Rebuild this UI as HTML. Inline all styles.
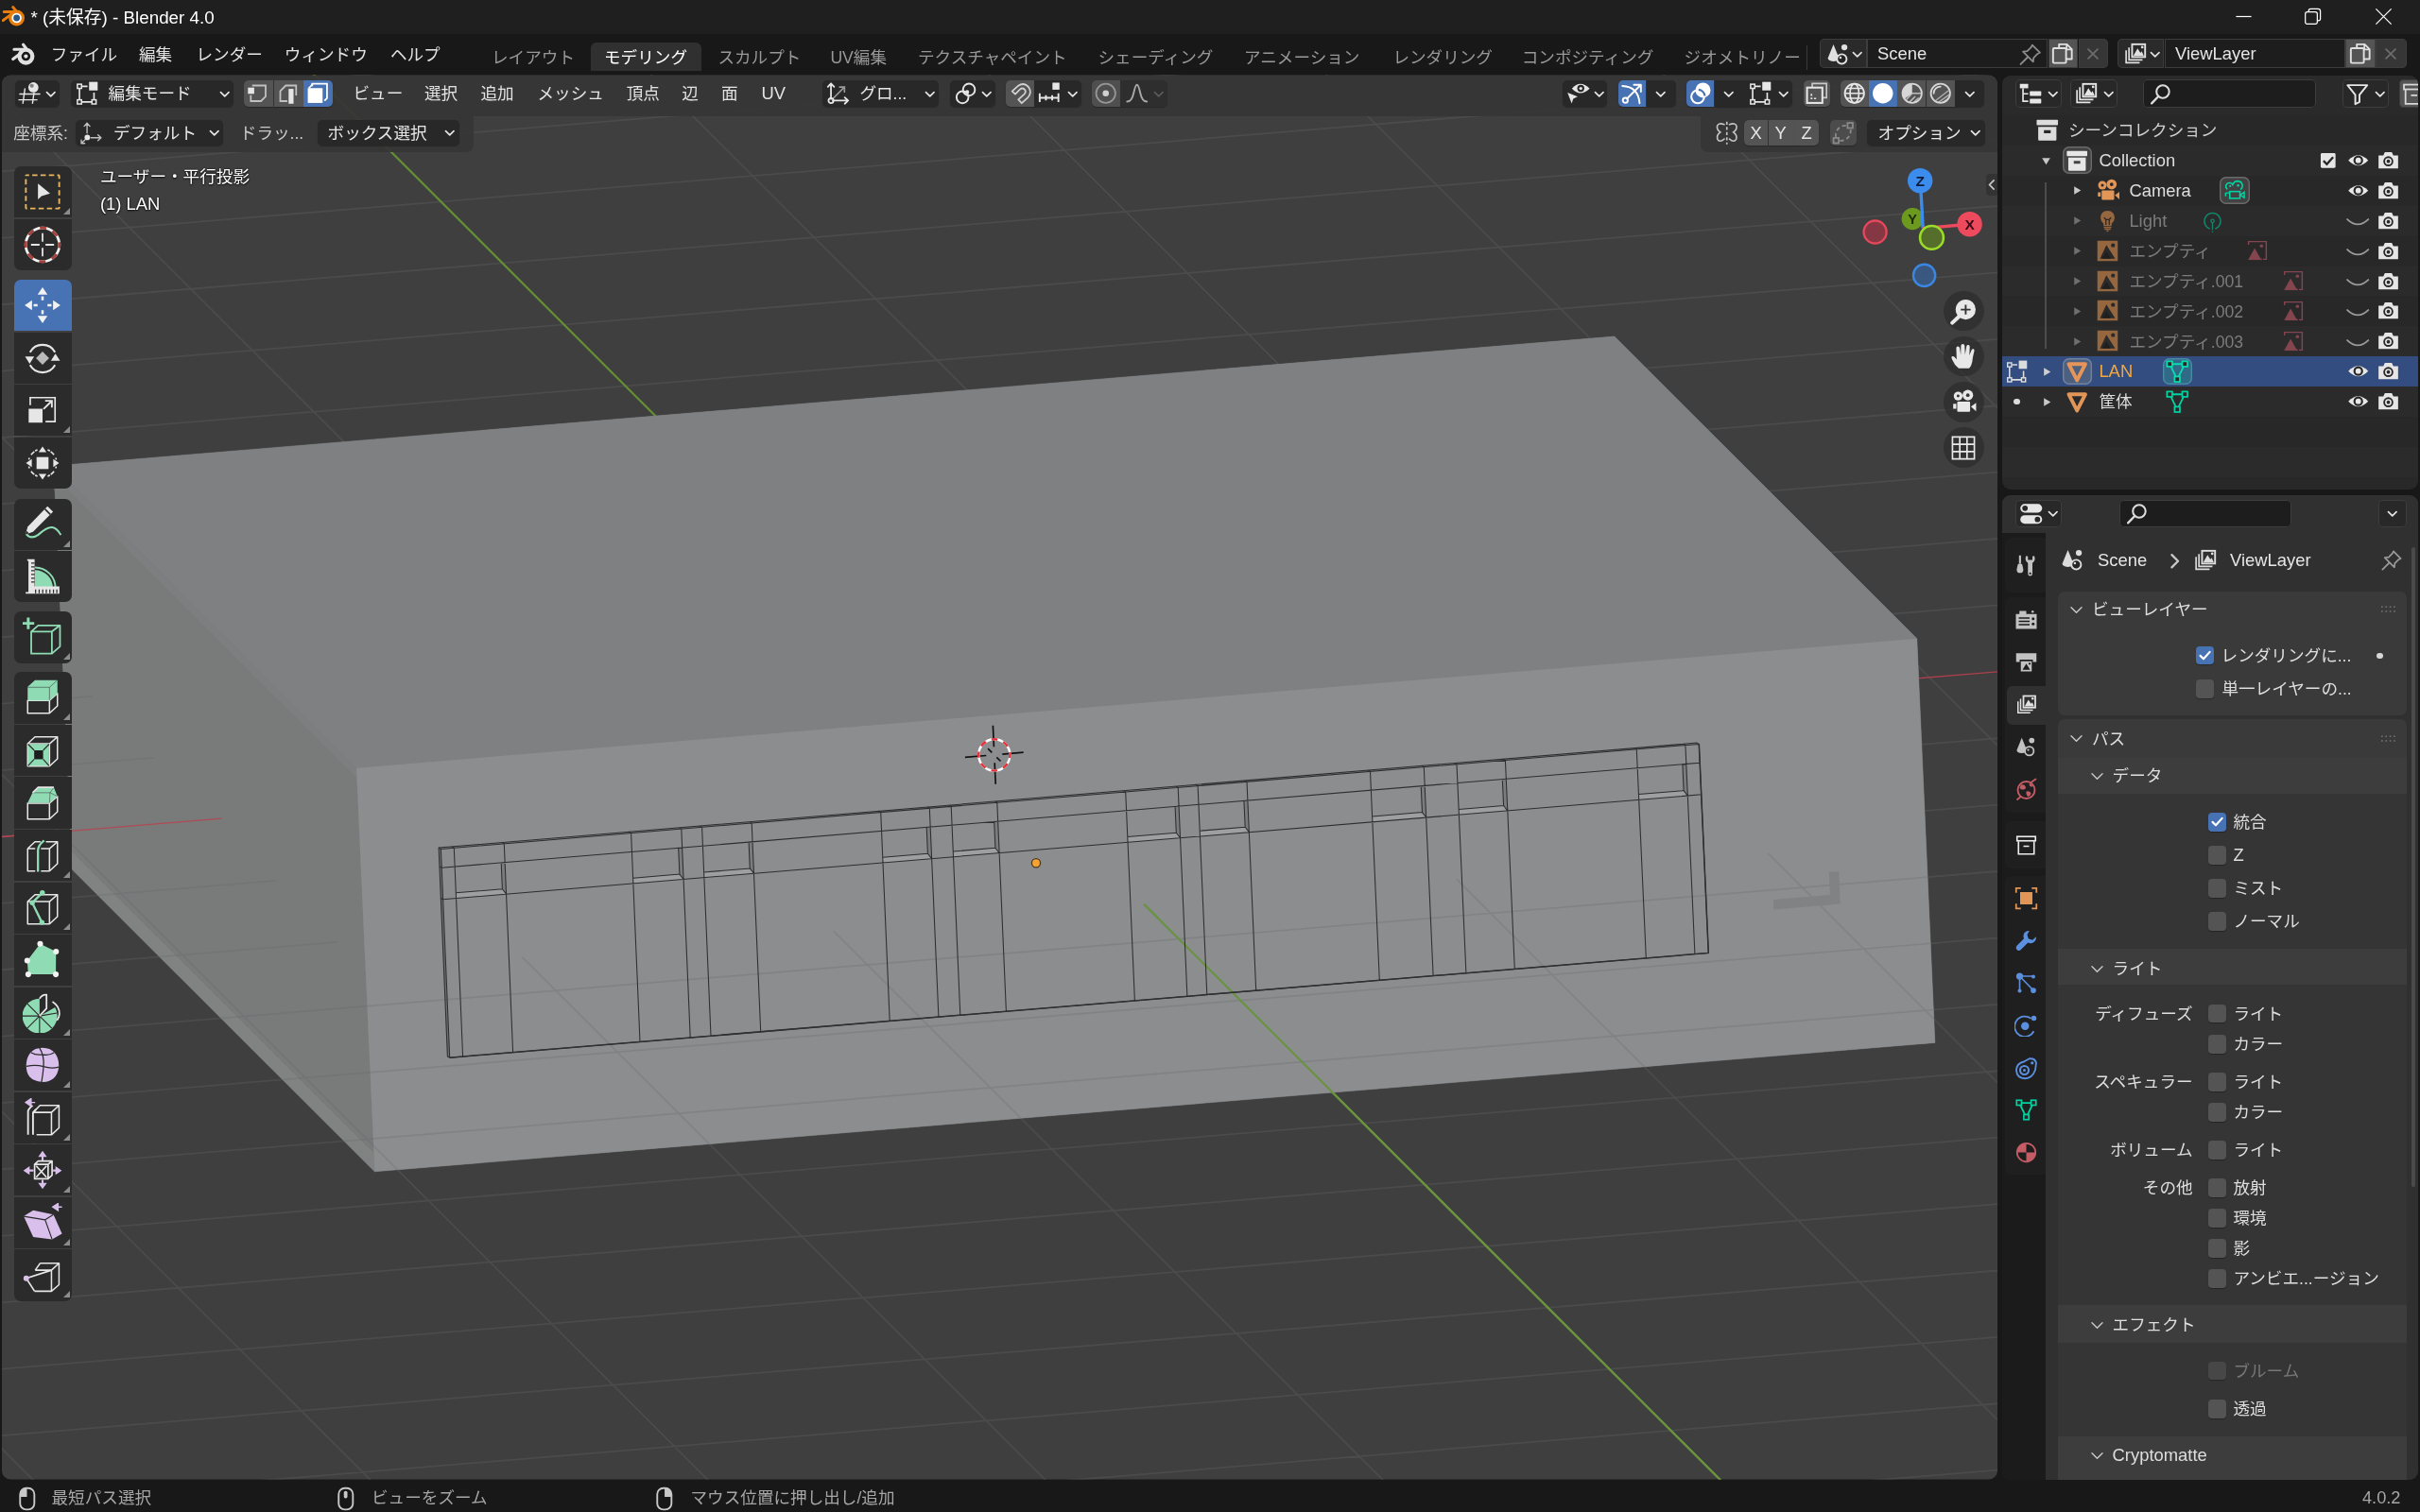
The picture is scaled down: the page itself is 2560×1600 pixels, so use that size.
<!DOCTYPE html><html lang="ja"><head><meta charset="utf-8"><title>* (未保存) - Blender 4.0</title>
<style>html,body{margin:0;padding:0;background:#181818;}
body{width:2560px;height:1600px;overflow:hidden;position:relative;font-family:"Liberation Sans","Noto Sans CJK JP",sans-serif;font-size:17.6px;color:#e6e6e6;}
.scene{position:absolute;left:0;top:0;}
.a{position:absolute;}
.t{position:absolute;white-space:nowrap;line-height:24px;height:24px;}
.l{font-size:18.4px;}
svg{display:block;overflow:visible;}
</style></head><body>
<svg width="0" height="0" style="position:absolute"><defs><symbol id="chev" viewBox="0 0 20 20"><path d="M5.6 7.8L10 12.2L14.4 7.8" fill="none" stroke="currentColor" stroke-width="1.7" stroke-linecap="round" stroke-linejoin="round"/></symbol><symbol id="chevR" viewBox="0 0 20 20"><path d="M7.6 5.2L12.4 10L7.6 14.8" fill="none" stroke="currentColor" stroke-width="1.7" stroke-linecap="round" stroke-linejoin="round"/></symbol><symbol id="panelv" viewBox="0 0 20 20"><path d="M4.2 7.2L10 13L15.8 7.2" fill="none" stroke="currentColor" stroke-width="1.5" stroke-linecap="round" stroke-linejoin="round"/></symbol><symbol id="triR" viewBox="0 0 20 20"><path d="M6.5 5.5L14 10L6.5 14.5Z" fill="currentColor"/></symbol><symbol id="triD" viewBox="0 0 20 20"><path d="M5.5 6.5L14.5 6.5L10 14Z" fill="currentColor"/></symbol><symbol id="x" viewBox="0 0 20 20"><path d="M5.5 5.5L14.5 14.5M14.5 5.5L5.5 14.5" fill="none" stroke="currentColor" stroke-width="1.6" stroke-linecap="round"/></symbol><symbol id="search" viewBox="0 0 20 20"><circle cx="11.6" cy="8" r="4.9" fill="none" stroke="currentColor" stroke-width="1.5"/><path d="M8.2 11.6L3 17" fill="none" stroke="currentColor" stroke-width="1.7" stroke-linecap="round"/></symbol><symbol id="check" viewBox="0 0 20 20"><path d="M4.8 10.4L8.4 14L15.4 6.2" fill="none" stroke="currentColor" stroke-width="2.3" stroke-linecap="round" stroke-linejoin="round"/></symbol><symbol id="dots" viewBox="0 0 20 20"><g fill="currentColor"><circle cx="3" cy="7.5" r="1"/><circle cx="7.6" cy="7.5" r="1"/><circle cx="12.2" cy="7.5" r="1"/><circle cx="16.8" cy="7.5" r="1"/><circle cx="3" cy="12.5" r="1"/><circle cx="7.6" cy="12.5" r="1"/><circle cx="12.2" cy="12.5" r="1"/><circle cx="16.8" cy="12.5" r="1"/></g></symbol><symbol id="pin" viewBox="0 0 20 20"><path d="M11.5 2.6L17.4 8.5L15.6 9.4L12.6 12.4L12.2 15.6L4.4 7.8L7.6 7.4L10.6 4.4Z" fill="none" stroke="currentColor" stroke-width="1.3" stroke-linejoin="round"/><path d="M8 12L2.6 17.4" fill="none" stroke="currentColor" stroke-width="1.4" stroke-linecap="round"/></symbol><symbol id="dup" viewBox="0 0 20 20"><path d="M7.4 5.5V2.8H13.4L17.2 6.6V14.2H13" fill="none" stroke="currentColor" stroke-width="1.4" stroke-linejoin="round"/><path d="M13.2 2.9V6.8H17" fill="none" stroke="currentColor" stroke-width="1.2"/><rect x="2.8" y="5.8" width="10" height="11.4" rx="0.8" fill="none" stroke="currentColor" stroke-width="1.4"/></symbol><symbol id="blender" viewBox="0 0 26 26"><circle cx="15.4" cy="14.6" r="6.9" fill="none" stroke="currentColor" stroke-width="4.3"/><circle cx="15.4" cy="14.6" r="2.1" fill="currentColor"/><path d="M12.6 2.2L17 8M2.9 7.3H15M1.8 17.6L10.4 11" fill="none" stroke="currentColor" stroke-width="3.1" stroke-linecap="round"/></symbol><symbol id="blenderc" viewBox="0 0 26 24"><path d="M11.8 1.6L16 7M2.2 6.6H14M1.2 15.6L9.6 9.4" fill="none" stroke="#e87d0d" stroke-width="3" stroke-linecap="round"/><circle cx="15.6" cy="13" r="8.4" fill="#e87d0d"/><circle cx="15.6" cy="13" r="5.3" fill="#fff"/><circle cx="15.6" cy="13" r="3.4" fill="#265787"/></symbol><symbol id="scene" viewBox="0 0 20 20"><path d="M6.2 2.2L10.4 12.6Q10.6 15 6.2 15.2Q1.8 15 2 12.6Z" fill="currentColor"/><circle cx="14.6" cy="4.4" r="2.3" fill="currentColor"/><circle cx="12.6" cy="13.4" r="3.7" fill="#242424" stroke="currentColor" stroke-width="1.4"/><circle cx="11.6" cy="12.4" r="0.9" fill="currentColor"/></symbol><symbol id="vlayer" viewBox="0 0 20 20"><path d="M3 7.4V17H13.4" fill="none" stroke="currentColor" stroke-width="1.2"/><path d="M5.2 5.2V14.8H15.6" fill="none" stroke="currentColor" stroke-width="1.2"/><rect x="7.6" y="2.8" width="10" height="9.8" fill="none" stroke="currentColor" stroke-width="1.4"/><path d="M8.6 11.6L11.8 6L14 9.4L15 8.2L16.6 11.6Z" fill="currentColor"/><circle cx="15.4" cy="5" r="1" fill="currentColor"/></symbol><symbol id="wmin" viewBox="0 0 20 20"><path d="M4 10H16" fill="none" stroke="currentColor" stroke-width="0.9"/></symbol><symbol id="wmax" viewBox="0 0 20 20"><rect x="4.2" y="6.4" width="9.4" height="9.4" rx="1.6" fill="none" stroke="currentColor" stroke-width="0.9"/><path d="M6.8 6.2V5.6Q6.8 4 8.4 4H14.2Q16 4 16 5.8V11.6Q16 13.2 14.4 13.2H13.8" fill="none" stroke="currentColor" stroke-width="0.9"/></symbol><symbol id="wclose" viewBox="0 0 20 20"><path d="M4 4L16 16M16 4L4 16" fill="none" stroke="currentColor" stroke-width="0.9"/></symbol><symbol id="view3d" viewBox="0 0 20 20"><path d="M5 6.6V17.6M12.4 9.6V17.6M1.6 10.6H17M1.6 15H15.4" fill="none" stroke="currentColor" stroke-width="1.05" stroke-linecap="round" transform="skewX(-8) translate(2,0)"/><circle cx="12.6" cy="5.4" r="3.9" fill="currentColor"/><circle cx="11.4" cy="4.2" r="1.5" fill="#282828" opacity="0.55"/></symbol><symbol id="editmode" viewBox="0 0 20 20"><path d="M4.4 6.2V15M6 16.6H14M15.6 15V9.4M6.4 4.6H10.6" fill="none" stroke="currentColor" stroke-width="1.2"/><rect x="2.8" y="3" width="3.2" height="3.2" fill="none" stroke="currentColor" stroke-width="1.1"/><rect x="2.8" y="15" width="3.2" height="3.2" fill="none" stroke="currentColor" stroke-width="1.1"/><rect x="14" y="15" width="3.2" height="3.2" fill="none" stroke="currentColor" stroke-width="1.1"/><rect x="11.8" y="1.2" width="6.6" height="6.6" fill="currentColor"/></symbol><symbol id="selv" viewBox="0 0 20 20"><path d="M5.6 4H16V12.4L12.4 16H4.6V11.4" fill="none" stroke="currentColor" stroke-width="1.3" opacity="0.75"/><rect x="2.4" y="5.6" width="4.8" height="4.8" fill="currentColor"/></symbol><symbol id="sele" viewBox="0 0 20 20"><path d="M9.4 16H4V8.2L8.2 4H16.2V11.6" fill="none" stroke="currentColor" stroke-width="1.3" opacity="0.75"/><rect x="10.4" y="6.6" width="3.8" height="11.4" fill="currentColor"/></symbol><symbol id="self" viewBox="0 0 20 20"><path d="M6 4.6V2.6H17.4V13.8L15.4 15.8" fill="none" stroke="currentColor" stroke-width="1.3"/><path d="M6.4 3L3.4 6" fill="none" stroke="currentColor" stroke-width="1.2"/><rect x="2.6" y="6" width="11.4" height="11.4" fill="currentColor"/></symbol><symbol id="orient" viewBox="0 0 20 20"><path d="M4.4 14.4V2.6M2 5L4.4 2.4L6.8 5M5.8 15.6H17.4M15 13.2L17.6 15.6L15 18" fill="none" stroke="currentColor" stroke-width="1.3" stroke-linecap="round" stroke-linejoin="round"/><circle cx="4.4" cy="15.6" r="1.9" fill="none" stroke="currentColor" stroke-width="1.3"/><path d="M6 14L14.6 5.4M10.6 5.2H14.8V9.4" fill="none" stroke="currentColor" stroke-width="1.2" opacity="0.6"/></symbol><symbol id="orient2" viewBox="0 0 20 20"><path d="M6.6 10V2.6M4.4 4.8L6.6 2.4L8.8 4.8M9.6 13.6H17.2M15 11.4L17.4 13.6L15 15.8M5 15.2L2.4 17.8M2.2 15.4V18H4.8" fill="none" stroke="currentColor" stroke-width="1" stroke-linecap="round" stroke-linejoin="round" opacity="0.8"/><circle cx="6.8" cy="13.4" r="2.1" fill="currentColor"/></symbol><symbol id="pivot" viewBox="0 0 20 20"><circle cx="12.4" cy="7.2" r="4.6" fill="none" stroke="currentColor" stroke-width="1.4"/><circle cx="7.4" cy="13" r="4.6" fill="none" stroke="currentColor" stroke-width="1.4"/><circle cx="11" cy="9" r="1.5" fill="currentColor"/></symbol><symbol id="magnet" viewBox="0 0 20 20"><path d="M3.4 8.4L7.8 4.4Q12.6 1 16.2 5.4Q19 9.6 15.2 13.6L10.8 17.6L8.2 14.8L12.6 10.8Q14.6 8.8 13 7Q11.4 5.4 9.4 7L5.8 10.6Z" fill="none" stroke="currentColor" stroke-width="1.3" stroke-linejoin="round"/></symbol><symbol id="snapinc" viewBox="0 0 20 20"><path d="M2.4 13.4H17.6M2.8 10V16.8M7.6 11.4V15.4M12.4 11.4V15.4M17.2 10V16.8" fill="none" stroke="currentColor" stroke-width="1.4"/><rect x="12.6" y="1.8" width="5.4" height="5.4" fill="currentColor"/></symbol><symbol id="prop" viewBox="0 0 20 20"><circle cx="10" cy="10" r="7.4" fill="none" stroke="currentColor" stroke-width="1.3" opacity="0.55"/><circle cx="10" cy="10" r="2.4" fill="currentColor"/></symbol><symbol id="falloff" viewBox="0 0 20 20"><path d="M2.4 16.4Q6 16.4 7.4 10Q8.8 3.4 10 3.4Q11.2 3.4 12.6 10Q14 16.4 17.6 16.4" fill="none" stroke="currentColor" stroke-width="1.4" stroke-linecap="round"/></symbol><symbol id="vis" viewBox="0 0 20 20"><path d="M5 6.4Q11.4 -0.8 18.6 6.4Q11.4 13.4 5 6.4Z" fill="currentColor"/><circle cx="11.8" cy="6.2" r="2.7" fill="#282828"/><circle cx="11.8" cy="6.2" r="1.2" fill="currentColor"/><path d="M1.6 9.4L9.4 12.6L6 14.2L4.8 17.8Z" fill="currentColor"/></symbol><symbol id="gizmo" viewBox="0 0 20 20"><path d="M2.4 4.4Q14.6 5 15.6 17.6" fill="none" stroke="currentColor" stroke-width="1.4" stroke-linecap="round"/><path d="M5.8 14.2L16.4 3.6M11.2 3.4H16.6V8.8" fill="none" stroke="currentColor" stroke-width="1.4" stroke-linecap="round" stroke-linejoin="round"/><circle cx="4.6" cy="15.4" r="1.9" fill="none" stroke="currentColor" stroke-width="1.4"/></symbol><symbol id="overlay" viewBox="0 0 20 20"><circle cx="12" cy="7.6" r="5.8" fill="currentColor"/><circle cx="8" cy="12.6" r="5" fill="none" stroke="currentColor" stroke-width="1.5"/><path d="M8.6 7.2A5.4 5.4 0 0 1 13.4 12" fill="none" stroke="#4772b3" stroke-width="1.5"/></symbol><symbol id="xray" viewBox="0 0 20 20"><path d="M6.6 5.4V2.4H17.6V13.4H14.6" fill="none" stroke="currentColor" stroke-width="1.2" opacity="0.8"/><rect x="2.6" y="5.6" width="11.8" height="11.8" fill="none" stroke="currentColor" stroke-width="1.5"/><path d="M6 10.4V14H9.8" fill="none" stroke="currentColor" stroke-width="1.2" stroke-dasharray="1.6 1.2"/></symbol><symbol id="shwire" viewBox="0 0 20 20"><circle cx="10" cy="10" r="7.4" fill="none" stroke="currentColor" stroke-width="1.3"/><ellipse cx="10" cy="10" rx="3.4" ry="7.4" fill="none" stroke="currentColor" stroke-width="1.2"/><path d="M2.6 10H17.4M3.6 6.2H16.4M3.6 13.8H16.4" fill="none" stroke="currentColor" stroke-width="1.1"/></symbol><symbol id="shsolid" viewBox="0 0 20 20"><circle cx="10" cy="10" r="7.8" fill="currentColor"/></symbol><symbol id="shmat" viewBox="0 0 20 20"><circle cx="10" cy="10" r="7.4" fill="none" stroke="currentColor" stroke-width="1.3"/><path d="M10 2.6A7.4 7.4 0 0 0 4 14.4L10 10Z" fill="currentColor"/><path d="M5 15.4L10 10H17.4M8 16.8L12.4 12.4M11.4 17L15 13.4" fill="none" stroke="currentColor" stroke-width="1.1" opacity="0.8"/></symbol><symbol id="shrend" viewBox="0 0 20 20"><circle cx="10" cy="10" r="7.4" fill="none" stroke="currentColor" stroke-width="1.3"/><path d="M4.8 10A5.2 5.2 0 0 1 10 4.8" fill="none" stroke="currentColor" stroke-width="1.3" stroke-linecap="round"/><path d="M6 15.8L16 8M8.6 16.8L16.8 11M11.6 17L16.4 13.6" fill="none" stroke="currentColor" stroke-width="1" opacity="0.7"/></symbol><symbol id="mirror" viewBox="0 0 20 20"><path d="M8 3.4Q3.6 1.8 2.6 4.6Q2 7.4 5 9.4Q1.8 11.6 2.8 14.8Q4.4 17.6 8 14.6M12 3.4Q16.4 1.8 17.4 4.6Q18 7.4 15 9.4Q18.2 11.6 17.2 14.8Q15.6 17.6 12 14.6" fill="none" stroke="currentColor" stroke-width="1.2" stroke-linecap="round"/><path d="M10 1.2V18.8" fill="none" stroke="currentColor" stroke-width="1.2" stroke-dasharray="2.4 1.6"/></symbol><symbol id="automerge" viewBox="0 0 20 20"><path d="M4.4 13.2A7.6 7.6 0 0 1 13.4 4.4M15.8 7.4A7.6 7.6 0 0 1 7 15.8" fill="none" stroke="currentColor" stroke-width="1.3" stroke-dasharray="3 2.2"/><rect x="13.4" y="2.2" width="4" height="4" fill="none" stroke="currentColor" stroke-width="1.3"/><rect x="2.6" y="13.8" width="4" height="4" fill="none" stroke="currentColor" stroke-width="1.3"/></symbol><symbol id="t-select" viewBox="0 0 40 40"><rect x="3.2" y="3.2" width="33.6" height="33.6" rx="0.6" fill="none" stroke="#e8b65f" stroke-width="1.8" stroke-dasharray="5.3 3.1" stroke-dashoffset="2.6"/><path d="M15.4 11.6V27.6L19 24.4L27.6 21.6Z" fill="#e6e6e6"/></symbol><symbol id="t-cursor" viewBox="0 0 40 40"><circle cx="20" cy="20" r="17" fill="none" stroke="#f2f2f2" stroke-width="2.6"/><circle cx="20" cy="20" r="17" fill="none" stroke="#a8403c" stroke-width="2.6" stroke-dasharray="6.68 6.68" stroke-dashoffset="3.3"/><path d="M20 8.4V17M20 23V31.6M8.4 20H17M23 20H31.6" fill="none" stroke="#e6e6e6" stroke-width="1.7"/></symbol><symbol id="t-move" viewBox="0 0 40 40"><g fill="#f2f2f2"><path d="M20 2L25 9.4H15Z"/><path d="M20 38L25 30.6H15Z"/><path d="M2 20L9.4 15V25Z"/><path d="M38 20L30.6 15V25Z"/><rect x="18.8" y="11" width="2.4" height="4"/><rect x="18.8" y="25" width="2.4" height="4"/><rect x="11" y="18.8" width="4" height="2.4"/><rect x="25" y="18.8" width="4" height="2.4"/></g></symbol><symbol id="t-rotate" viewBox="0 0 40 40"><path d="M7.4 14A14.4 14.4 0 0 1 32.6 14M32.6 27A14.4 14.4 0 0 1 7.4 27" fill="none" stroke="#e6e6e6" stroke-width="2"/><path d="M2.4 18.4H11.6L7 25.6Z" fill="#e6e6e6"/><path d="M37.6 22.6H28.4L33 15.4Z" fill="#e6e6e6"/><path d="M20 13.4L26.6 20L20 26.6L13.4 20Z" fill="#b9b9b9"/></symbol><symbol id="t-scale" viewBox="0 0 40 40"><rect x="6" y="18.6" width="14" height="14" fill="#e6e6e6"/><path d="M7.6 15V7.4H32.6V31.6H23" fill="none" stroke="#e6e6e6" stroke-width="1.6"/><path d="M21 19L28.6 11.4M22.6 10.6H29.4V17.4" fill="none" stroke="#e6e6e6" stroke-width="1.8"/></symbol><symbol id="t-transform" viewBox="0 0 40 40"><g transform="translate(20 20) scale(0.86) translate(-20 -20)"><rect x="13" y="13" width="14" height="14" fill="#e6e6e6"/><path d="M10.4 6.6A16.4 16.4 0 0 0 6.6 10.4M29.6 6.6A16.4 16.4 0 0 1 33.4 10.4M6.6 29.6A16.4 16.4 0 0 0 10.4 33.4M33.4 29.6A16.4 16.4 0 0 1 29.6 33.4" fill="none" stroke="#e6e6e6" stroke-width="1.8"/><path d="M20 0.6L24.6 7.4H15.4ZM20 39.4L24.6 32.6H15.4ZM0.6 20L7.4 15.4V24.6ZM39.4 20L32.6 15.4V24.6Z" fill="#e6e6e6"/><path d="M11.4 5.8A16.4 16.4 0 0 1 14 4.6M26 4.6A16.4 16.4 0 0 1 28.6 5.8M4.6 14A16 16 0 0 0 4 16M4 24A16 16 0 0 0 4.6 26M35.4 14A16 16 0 0 1 36 16M36 24A16 16 0 0 1 35.4 26M11.4 34.2A16.4 16.4 0 0 0 14 35.4M26 35.4A16.4 16.4 0 0 0 28.6 34.2" fill="none" stroke="#e6e6e6" stroke-width="1.8"/></g></symbol><symbol id="t-annotate" viewBox="0 0 40 40"><path d="M3.4 29.4Q8 35.6 15.4 30.6Q24 22.6 29.6 22.8Q34.6 23.4 38.4 30.6" fill="none" stroke="#8fdbb4" stroke-width="2"/><path d="M25 1.6L30.6 7.2L10.4 27.4L2.6 30.2L5.2 22.2Z" fill="#e6e6e6"/><path d="M22.4 4.4L27.8 9.8" stroke="#2b2b2b" stroke-width="1.6"/><path d="M2.6 30.2L4 26.4L6.4 28.8Z" fill="#2b2b2b"/></symbol><symbol id="t-measure" viewBox="0 0 40 40"><path d="M12.4 31.6V13.6A18 18 0 0 1 30.4 31.6Z" fill="#8fdbb4"/><path d="M12.4 11A20.6 20.6 0 0 1 33 31.6" fill="none" stroke="#8fdbb4" stroke-width="1.8"/><path d="M4.6 2.6H12V30H37V37.4H3V35.6H5.8V4.4H4.6Z" fill="#e6e6e6"/><path d="M8.6 6.6H12M8.6 10.4H12M8.6 14.2H12M8.6 18H12M8.6 21.8H12M8.6 25.6H12M13 33V37M16.6 33V37M20.2 33V37M23.8 33V37M27.4 33V37M31 33V37M34.4 33V37" stroke="#2b2b2b" stroke-width="1.2"/></symbol><symbol id="t-addcube" viewBox="0 0 40 40"><path d="M8.6 14.6H29.4V36.8H8.6ZM8.6 14.6L15.6 8.4H37.6L29.4 14.6M37.6 8.4V29.6L29.4 36.8" fill="none" stroke="#8fdbb4" stroke-width="1.7" stroke-linejoin="round"/><path d="M5.6 0.4V12.2M-0.4 6.3H11.6" fill="none" stroke="#8fdbb4" stroke-width="2.8"/></symbol><symbol id="t-extrude" viewBox="0 0 40 40"><path d="M5 23H27V36H5ZM27 23L35 16V28.6L27 36" fill="none" stroke="#e6e6e6" stroke-width="1.45" stroke-linejoin="round"/><path d="M5 9.4L12.4 2.6H35L35 16L27 23H5Z" fill="#8fdbb4"/><path d="M5 9.8H27L34.6 3M27 9.8V22.6" stroke="#2b2b2b" stroke-width="0.9" fill="none" opacity="0.55"/></symbol><symbol id="t-inset" viewBox="0 0 40 40"><path d="M5 13.4H27V36H5ZM5 13.4L12.4 6.4H35L27 13.4M35 6.4V28.6L27 36" fill="none" stroke="#e6e6e6" stroke-width="1.45" stroke-linejoin="round"/><path d="M5.4 13.8H26.6V35.6H5.4Z" fill="#8fdbb4"/><rect x="11.6" y="20" width="9" height="9" fill="#1d1d1d"/><path d="M5.4 13.8L11.6 20M26.6 13.8L20.6 20M5.4 35.6L11.6 29M26.6 35.6L20.6 29" stroke="#2b2b2b" stroke-width="1.1"/></symbol><symbol id="t-bevel" viewBox="0 0 40 40"><path d="M5 20H27V36H5ZM27 20L35 13V28.6L27 36" fill="none" stroke="#e6e6e6" stroke-width="1.45" stroke-linejoin="round"/><path d="M5 19.6L10 9.4L15.6 4H31.4L35 13L27 19.6Z" fill="#8fdbb4"/><path d="M10 9.4H27.6L35 13M27.6 9.4L31.4 4M27.6 9.4L27 19.6" stroke="#2b2b2b" stroke-width="0.9" fill="none" opacity="0.5"/><path d="M10 9.4L15.6 4H31.4" fill="none" stroke="#e6e6e6" stroke-width="1.6"/></symbol><symbol id="t-loopcut" viewBox="0 0 40 40"><path d="M5 13.4H12.6M18.4 13.4H27V36H18.4M12.6 36H5V13.4M5 13.4L12.4 6.4H18M23.4 6.4H35L27 13.4M35 6.4V28.6L27 36" fill="none" stroke="#e6e6e6" stroke-width="1.45" stroke-linejoin="round"/><path d="M15.4 36.6V15Q15.6 10 21.6 5.2" fill="none" stroke="#8fdbb4" stroke-width="2.2"/></symbol><symbol id="t-knife" viewBox="0 0 40 40"><path d="M5 13.4H27V36H5ZM5 13.4L12.4 6.4H35L27 13.4M35 6.4V28.6L27 36" fill="none" stroke="#e6e6e6" stroke-width="1.45" stroke-linejoin="round"/><path d="M19.6 4.6L9.6 14.6L19.4 34.4" fill="none" stroke="#8fdbb4" stroke-width="2.2" stroke-linejoin="round"/><circle cx="19.8" cy="4.6" r="2.6" fill="#8fdbb4"/><circle cx="9.6" cy="14.6" r="2.6" fill="#8fdbb4"/><circle cx="19.4" cy="34.4" r="2.6" fill="#8fdbb4"/></symbol><symbol id="t-poly" viewBox="0 0 40 40"><path d="M17.6 3.6L33.6 11.4L33.4 34.4H5.6L4.6 20.4Z" fill="#8fdbb4"/><g fill="#f2f2f2"><circle cx="17.6" cy="3.6" r="2.9"/><circle cx="33.6" cy="11.4" r="2.9"/><circle cx="33.4" cy="34.4" r="2.9"/><circle cx="5.6" cy="34.4" r="2.9"/><circle cx="4.6" cy="20.4" r="2.9"/></g></symbol><symbol id="t-spin" viewBox="0 0 40 40"><path d="M17 23L17 5.4A17.6 17.6 0 1 0 32.6 14.4Z" fill="#8fdbb4"/><path d="M17 23L4.6 10.6M17 23L-0.6 23M17 23L4.6 35.4M17 23V40.6M17 23L29.4 35.4M17 23L34.4 20" stroke="#2b2b2b" stroke-width="1.1"/><path d="M17 5.4Q20 1 24 1.6V15.4L17 23M30 8.6Q37.6 13.4 37 21.4Q36.6 25 34.6 27.4" fill="none" stroke="#e6e6e6" stroke-width="1.7"/></symbol><symbol id="t-smooth" viewBox="0 0 40 40"><path d="M8 7.4Q12 2.8 20 2.6Q28 2.8 32 7.4Q36.6 13 36.4 21Q36 29 31 33.6Q26 37.6 19 37Q11 36.4 7 32Q3.2 27 3.6 19Q4 12 8 7.4Z" fill="#d9c0ec"/><path d="M3.8 21.4Q13 19.4 21 21.6Q29 24 36.2 22M17 2.8Q22 11 21 21.6Q20.4 30 19 37M8.2 7.4Q14 10.6 19.6 9.4M31.8 7.4Q26 11 19.8 9.4" stroke="#2b2b2b" stroke-width="1.2" fill="none"/></symbol><symbol id="t-eslide" viewBox="0 0 40 40"><path d="M10.6 14.4H29V37H14M10.6 14.4L17.4 7.4H36.6L29 14.4M36.6 7.4V30L29 37" fill="none" stroke="#e6e6e6" stroke-width="1.45" stroke-linejoin="round"/><path d="M10.4 37V14.6L13.4 11.4M5.4 37V13Q6 10.6 10 7.4" fill="none" stroke="#e6e6e6" stroke-width="1.8"/><path d="M3 4.4L8.4 0.6V8.2ZM8 4.4H12.6" fill="#d9c0ec" stroke="#d9c0ec" stroke-width="1.4"/></symbol><symbol id="t-shrink" viewBox="0 0 40 40"><path d="M12 14.4H25.6V29H12ZM12 14.4L15.6 11H29.6L25.6 14.4M29.6 11V25.4L25.6 29" fill="none" stroke="#e6e6e6" stroke-width="1.6" stroke-linejoin="round"/><path d="M13.6 16L24 27.4M24 16L13.6 27.4" fill="none" stroke="#e6e6e6" stroke-width="1.6"/><path d="M20 0.6L24.4 7H15.6ZM20 39.4L24.4 33H15.6ZM0.6 20.6L7 16.2V25ZM39.4 20.6L33 16.2V25Z" fill="#d9c0ec"/><path d="M20 6V10.4M20 30V34M6 20.6H11M30.6 20.6H34" stroke="#d9c0ec" stroke-width="2"/></symbol><symbol id="t-shear" viewBox="0 0 40 40"><path d="M1 13.4L10.6 7.4L31 11.6L39.6 31L29.6 36.6L10.6 34.4Z" fill="#d9c0ec"/><path d="M1 13.4L22.6 17L29.6 36.6M22.6 17L31 11.6" stroke="#2b2b2b" stroke-width="1.1" fill="none"/><path d="M30.4 4L35.6 0.6V7.4ZM35 4H39.6" fill="#d9c0ec" stroke="#d9c0ec" stroke-width="1.4"/></symbol><symbol id="t-rip" viewBox="0 0 40 40"><path d="M12 35.6H29V14.4M12.6 14.4H29M17.6 7.4L12.6 14.4M17.6 7.4H36.6L29 14.4M36.6 7.4V29L29 35.6" fill="none" stroke="#e6e6e6" stroke-width="1.45" stroke-linejoin="round"/><path d="M12 35.6L3.6 22.6L29 14.4" fill="none" stroke="#e6e6e6" stroke-width="1.6"/><circle cx="3.6" cy="22.6" r="2.8" fill="#d9c0ec"/></symbol><symbol id="n-zoom" viewBox="0 0 30 30"><circle cx="17.4" cy="13.6" r="10.6" fill="currentColor"/><path d="M10 21.2L3.2 27.6" stroke="currentColor" stroke-width="4" stroke-linecap="round"/><path d="M17.4 8.4V18.8M12.2 13.6H22.6" stroke="#333" stroke-width="1.9"/></symbol><symbol id="n-hand" viewBox="0 0 30 30"><path transform="translate(15 15) scale(1.16 1.08) translate(-15 -15)" d="M10.4 27.6Q6 24 4 18.4Q2.6 15.4 4.4 15Q6 14.8 8.4 18.4L8 6.4Q8 4.6 9.6 4.6Q11 4.6 11.4 6.4L12.4 13.4L12.6 3.8Q12.8 2 14.4 2Q16 2 16.2 3.8L16.6 13.2L18 4.6Q18.4 3 19.8 3.2Q21.2 3.4 21.2 5.2L20.8 14L23 8.4Q23.6 7 24.8 7.4Q26 8 25.6 9.6Q24 16 23.6 21Q23 25 20.6 27.6Z" fill="currentColor"/></symbol><symbol id="n-camera" viewBox="0 0 30 30"><circle cx="9" cy="7.6" r="5" fill="currentColor"/><circle cx="20" cy="6.6" r="6" fill="currentColor"/><circle cx="9" cy="7.6" r="1.6" fill="#333"/><circle cx="20" cy="6.6" r="2" fill="#333"/><rect x="8" y="14" width="14.6" height="11.4" rx="1" fill="currentColor"/><path d="M23.6 19.6L29.4 15.4V25Z" fill="currentColor"/><path d="M3.4 16.4H7V22H3.4Z" fill="currentColor"/></symbol><symbol id="n-grid" viewBox="0 0 30 30"><path d="M2.6 2.6H27.4V27.4H2.6ZM10.9 2.6V27.4M19.1 2.6V27.4M2.6 10.9H27.4M2.6 19.1H27.4" fill="none" stroke="currentColor" stroke-width="1.8"/></symbol><symbol id="o-display" viewBox="0 0 20 20"><rect x="2" y="2" width="6.4" height="3.4" fill="currentColor"/><path d="M4.4 5.4V15.4H8.4M4.4 9.6H8.4" fill="none" stroke="currentColor" stroke-width="1.2"/><rect x="9.6" y="7.6" width="8.8" height="3.6" rx="0.5" fill="currentColor"/><rect x="9.6" y="13.4" width="8.8" height="3.6" rx="0.5" fill="currentColor"/></symbol><symbol id="o-filter" viewBox="0 0 20 20"><path d="M2.4 3H17.6L11.6 10.4V16L8.4 17.6V10.4Z" fill="none" stroke="currentColor" stroke-width="1.4" stroke-linejoin="round"/></symbol><symbol id="coll" viewBox="0 0 20 20"><rect x="1.8" y="2" width="16.4" height="4.2" rx="0.6" fill="currentColor"/><path d="M3 7.4H17V17.2Q17 18 16.2 18H3.8Q3 18 3 17.2ZM7.4 10H12.6V12.4H7.4Z" fill="currentColor" fill-rule="evenodd"/></symbol><symbol id="collo" viewBox="0 0 20 20"><rect x="2.2" y="2.6" width="15.6" height="3.6" fill="none" stroke="currentColor" stroke-width="1.3"/><path d="M3.4 6.6V17.4H16.6V6.6M7.6 10.8H12.4" fill="none" stroke="currentColor" stroke-width="1.3"/></symbol><symbol id="camobj" viewBox="0 0 20 20"><circle cx="5.6" cy="5.6" r="3.6" fill="currentColor"/><circle cx="13.4" cy="4.8" r="4.3" fill="currentColor"/><circle cx="5.6" cy="5.6" r="1.2" fill="#282828"/><circle cx="13.4" cy="4.8" r="1.5" fill="#282828"/><rect x="5" y="10" width="10.6" height="8" rx="0.8" fill="currentColor"/><path d="M16.2 14L20 11.2V17.6Z" fill="currentColor"/><rect x="1.8" y="11.6" width="2.4" height="3.6" fill="currentColor"/></symbol><symbol id="camdata" viewBox="0 0 20 20"><path d="M3.6 9.4Q1.6 8 2.4 5.6Q3.4 3.4 6 3.8Q7.4 4 8.2 5.4Q9.4 2.2 12.8 2.2Q16.4 2.6 16.8 6Q17 8.2 15.2 9.6" fill="none" stroke="currentColor" stroke-width="1.3"/><circle cx="6" cy="6.6" r="0.9" fill="currentColor"/><circle cx="13" cy="6" r="1.1" fill="currentColor"/><rect x="5.6" y="11.4" width="9" height="6" fill="none" stroke="currentColor" stroke-width="1.3"/><path d="M14.8 14.4L18.4 12V16.8ZM2 12.6H5.4M2 12.6V15.6" fill="none" stroke="currentColor" stroke-width="1.2"/></symbol><symbol id="lightobj" viewBox="0 0 20 20"><path d="M10 1.6Q15.8 1.8 16 7.6Q15.8 10.6 13.4 12.6V14.4H6.6V12.6Q4.2 10.6 4 7.6Q4.2 1.8 10 1.6Z" fill="currentColor"/><path d="M7 7.4L8.6 9H11.4L13 7.4M8.6 9V13.6M11.4 9V13.6" stroke="#282828" stroke-width="1" fill="none"/><path d="M6.8 15.6H13.2M7.4 17.2H12.6" stroke="currentColor" stroke-width="1.1"/><path d="M8.6 18.2H11.4L10 19.6Z" fill="currentColor"/></symbol><symbol id="lightdata" viewBox="0 0 20 20"><path d="M7.6 16.6A7.4 7.4 0 1 1 12.4 16.6" fill="none" stroke="currentColor" stroke-width="1.3"/><circle cx="10" cy="9.4" r="1.5" fill="none" stroke="currentColor" stroke-width="1.1"/><path d="M10 11V17.6M10 18.8V19.8" fill="none" stroke="currentColor" stroke-width="1.2"/></symbol><symbol id="imgempty" viewBox="0 0 20 20"><path d="M1.4 1.4H18.6V18.6H1.4ZM3.6 16.6H16.4L9 5ZM14.6 3.6A1.7 1.7 0 1 0 14.6 7A1.7 1.7 0 1 0 14.6 3.6Z" fill="currentColor" fill-rule="evenodd"/><path d="M5.4 16.6L9 10.4L12.6 16.6Z" fill="#1f1f1f"/></symbol><symbol id="imgdata" viewBox="0 0 20 20"><path d="M2.2 5V2.2H17.8V17.8H15" fill="none" stroke="currentColor" stroke-width="1.2"/><path d="M2.2 17.8H14" fill="none" stroke="currentColor" stroke-width="1.2"/><path d="M2.2 17.8L7.6 8L13 17.8Z" fill="currentColor"/><circle cx="13.6" cy="6" r="1.5" fill="currentColor"/></symbol><symbol id="meshobj" viewBox="0 0 20 20"><path d="M3.4 4H16.6L10 17Z" fill="none" stroke="currentColor" stroke-width="3" stroke-linejoin="round"/></symbol><symbol id="meshdata" viewBox="0 0 20 20"><path d="M4 4H16L10 16.4Z" fill="none" stroke="currentColor" stroke-width="1.4"/><rect x="1.8" y="1.8" width="4.2" height="4.2" fill="#282828" stroke="currentColor" stroke-width="1.3"/><rect x="14" y="1.8" width="4.2" height="4.2" fill="#282828" stroke="currentColor" stroke-width="1.3"/><rect x="7.9" y="14" width="4.2" height="4.2" fill="#282828" stroke="currentColor" stroke-width="1.3"/></symbol><symbol id="eye" viewBox="0 0 20 20"><path d="M1 10Q10 0.6 19 10Q10 19.4 1 10Z" fill="currentColor"/><circle cx="10" cy="10" r="4.4" fill="#282828"/><circle cx="10" cy="10" r="2.5" fill="currentColor"/></symbol><symbol id="eyec" viewBox="0 0 20 20"><path d="M1.6 8.4Q10 16.4 18.4 8.4" fill="none" stroke="currentColor" stroke-width="1.4" stroke-linecap="round"/></symbol><symbol id="rcam" viewBox="0 0 20 20"><path d="M1 5.6H5.4L6.8 2.6H13.2L14.6 5.6H19V17.6H1Z" fill="currentColor"/><circle cx="10" cy="11" r="4.6" fill="#282828"/><circle cx="10" cy="11" r="3" fill="currentColor"/><circle cx="10" cy="11" r="1.6" fill="#282828"/></symbol><symbol id="cbox" viewBox="0 0 20 20"><rect x="2" y="2" width="16" height="16" rx="1.5" fill="currentColor"/><path d="M5 10.4L8.6 14L15.4 6.4" fill="none" stroke="#282828" stroke-width="2.4"/></symbol><symbol id="p-editor" viewBox="0 0 20 20"><rect x="1.6" y="2.4" width="16.8" height="6.6" rx="3.3" fill="currentColor"/><rect x="1.6" y="11" width="16.8" height="6.6" rx="3.3" fill="currentColor"/><circle cx="5.2" cy="5.7" r="2.1" fill="#282828"/><circle cx="14.8" cy="14.3" r="2.1" fill="#282828"/><rect x="4" y="3.6" width="9" height="4.2" rx="2.1" fill="#282828" opacity="0"/></symbol><symbol id="p-tool" viewBox="0 0 20 20"><path d="M4.7 1.4V8.4" stroke="currentColor" stroke-width="1.7"/><path d="M2.7 9.6Q2.7 8.3 3.9 8.3H5.5Q6.7 8.3 6.7 9.6L7.5 13.3Q7.5 16.2 4.7 16.2Q1.9 16.2 1.9 13.3Z" fill="currentColor"/><path d="M9.8 1.8Q8.4 5.6 11.4 7.8V16.8Q11.4 18.8 13.3 18.8Q15.2 18.8 15.2 16.8V7.8Q18.2 5.6 16.8 1.8L15.2 2.2V5.2H11.4V2.2Z" fill="currentColor"/><circle cx="13.3" cy="16.6" r="0.9" fill="#1d1d1d"/></symbol><symbol id="p-render" viewBox="0 0 20 20"><path d="M1.2 5.4H18.8V18H1.2ZM4.2 5.6V2.8H10V5.6Z" fill="currentColor"/><circle cx="15.4" cy="3.4" r="1" fill="currentColor"/><path d="M3.6 8.8H12.8M3.6 11.6H12.8M3.6 14.4H12.8" stroke="#1d1d1d" stroke-width="1.3"/><circle cx="15.8" cy="9.4" r="1.2" fill="#1d1d1d"/><circle cx="15.8" cy="13.8" r="1.2" fill="#1d1d1d"/></symbol><symbol id="p-output" viewBox="0 0 20 20"><path d="M1.4 2.6H18.6V10H15.6V8H4.4V10H1.4Z" fill="currentColor"/><path d="M5.4 9.4H14.6V18H5.4Z" fill="currentColor"/><path d="M6.8 16.6L10 11.4L13.2 16.6Z" fill="#1d1d1d"/><circle cx="12.8" cy="11.4" r="0.9" fill="#1d1d1d"/></symbol><symbol id="p-world" viewBox="0 0 20 20"><circle cx="10" cy="10.4" r="7.2" fill="none" stroke="currentColor" stroke-width="1.5"/><path d="M5.4 6Q8.6 5.4 9.4 7.6Q10 9.6 7.6 10Q5.6 10.4 4.4 8.6ZM10 11.6Q13 11 14 13Q13.6 15.6 11.4 16Q9.6 14.6 10 11.6ZM12.6 4.6Q15 5 15.6 7.4Q13.6 8 12.6 6.6Z" fill="currentColor"/><path d="M14.4 3.6L18 1.2M2.4 18.4L5.4 16" fill="none" stroke="currentColor" stroke-width="1.4" stroke-linecap="round"/></symbol><symbol id="p-object" viewBox="0 0 20 20"><rect x="4.8" y="4.8" width="10.4" height="10.4" fill="currentColor"/><path d="M1.4 5.4V1.4H5.4M14.6 1.4H18.6V5.4M18.6 14.6V18.6H14.6M5.4 18.6H1.4V14.6" fill="none" stroke="currentColor" stroke-width="1.4"/></symbol><symbol id="p-mod" viewBox="0 0 20 20"><path d="M12.6 1.6Q9 1.4 7.8 4.6Q7.2 6.4 8 8.2L1.8 14.4Q0.6 16 2 17.6Q3.6 19 5.2 17.8L11.4 11.6Q13.6 12.6 15.8 11.6Q18.6 10 18.4 6.6L15.2 9.4L11.8 8.2L10.8 4.8Z" fill="currentColor"/></symbol><symbol id="p-part" viewBox="0 0 20 20"><circle cx="4.4" cy="4" r="2.9" fill="currentColor"/><circle cx="16" cy="4.4" r="1.6" fill="currentColor"/><circle cx="4.4" cy="16.4" r="1.6" fill="currentColor"/><circle cx="16" cy="16" r="2.3" fill="currentColor"/><path d="M4.4 4H16M4.4 4V16.4M4.4 4L16 16" fill="none" stroke="currentColor" stroke-width="1.3"/></symbol><symbol id="p-phys" viewBox="0 0 20 20"><circle cx="9" cy="11" r="3.4" fill="currentColor"/><path d="M14 4.6A8.6 8.6 0 1 0 16.4 15.4" fill="none" stroke="currentColor" stroke-width="1.4"/><circle cx="16.4" cy="4.4" r="2.2" fill="currentColor"/></symbol><symbol id="p-constr" viewBox="0 0 20 20"><path d="M12.6 1.8Q17.6 1.4 18.4 5.4L17.6 11.4Q15 18.4 9 18.6Q2 18.4 1.6 11.8Q1.8 5.6 8 4.4Z" fill="none" stroke="currentColor" stroke-width="1.5" stroke-linejoin="round"/><circle cx="8.4" cy="11.6" r="3.6" fill="none" stroke="currentColor" stroke-width="1.7"/><circle cx="8.4" cy="11.6" r="1.2" fill="currentColor"/><circle cx="15" cy="5.4" r="1.3" fill="currentColor"/></symbol><symbol id="p-mat" viewBox="0 0 20 20"><circle cx="10" cy="10" r="7.8" fill="currentColor"/><path d="M10 10V2.2A7.8 7.8 0 0 1 17.8 10ZM10 10V17.8A7.8 7.8 0 0 1 2.2 10Z" fill="#1d1d1d"/><circle cx="10" cy="10" r="7.8" fill="none" stroke="currentColor" stroke-width="1.4"/></symbol><symbol id="m-left" viewBox="0 0 20 20"><rect x="5" y="2.6" width="10.4" height="15.6" rx="4.4" fill="none" stroke="currentColor" stroke-width="1.3"/><path d="M5 9V7Q5 2.6 10 2.6V9Z" fill="currentColor"/></symbol><symbol id="m-mid" viewBox="0 0 20 20"><rect x="5" y="2.6" width="10.4" height="15.6" rx="4.4" fill="none" stroke="currentColor" stroke-width="1.3"/><rect x="8.8" y="4.6" width="2.6" height="5.4" rx="1.2" fill="currentColor"/></symbol><symbol id="m-right" viewBox="0 0 20 20"><rect x="5" y="2.6" width="10.4" height="15.6" rx="4.4" fill="none" stroke="currentColor" stroke-width="1.3"/><path d="M15.4 9V7Q15.4 2.6 10.4 2.6V9Z" fill="currentColor"/></symbol></defs></svg>
<svg class="scene" width="2560" height="1600" viewBox="0 0 2560 1600">
<defs>
<clipPath id="vp"><rect x="2" y="79.5" width="2111" height="1486" rx="9"/></clipPath>
<clipPath id="infront"><polygon points="66.7,706.5 386.7,1026.2 2037.3,889.6 2046.9,1103.4 396.4,1239.8 76.4,920.1"/></clipPath>
</defs>
<g clip-path="url(#vp)">
<rect x="0" y="70" width="2120" height="1500" fill="#3f3f3f"/>
<path d="M-15.4 1872.5L3941 1545.3M-80.4 1807.5L3876 1480.2M-145.5 1742.5L3810.9 1415.2M-210.5 1677.4L3745.9 1350.2M-275.6 1612.4L3680.8 1285.2M-340.7 1547.4L3615.7 1220.2M-405.7 1482.4L3550.7 1155.1M-470.8 1417.4L3485.6 1090.1M-535.8 1352.3L3420.6 1025.1M-600.9 1287.3L3355.5 960.1M-666 1222.3L3290.4 895.1M-731 1157.3L3225.4 830M-796.1 1092.3L3160.3 765M-861.1 1027.2L3095.3 700M-991.3 897.2L2965.1 570M-1056.3 832.2L2900.1 504.9M-1121.4 767.2L2835 439.9M-1186.4 702.1L2770 374.9M-1251.5 637.1L2704.9 309.9M-1316.6 572.1L2639.8 244.9M-1381.6 507.1L2574.8 179.8M-1446.7 442.1L2509.7 114.8M-1511.7 377L2444.7 49.8M-1576.8 312L2379.6 -15.2M-1641.9 247L2314.5 -80.2M-1706.9 182L2249.5 -145.3M-1772 117L2184.4 -210.3M314.3 1845.2L-1507.3 24.7M644 1818L-1177.6 -2.6M973.7 1790.7L-847.9 -29.9M1303.4 1763.4L-518.2 -57.1M1633.1 1736.2L-188.5 -84.4M2292.5 1681.6L470.9 -138.9M2622.2 1654.3L800.6 -166.2M2951.9 1627.1L1130.3 -193.5M3281.6 1599.8L1460 -220.8M3611.3 1572.5L1789.7 -248" stroke="#4b4b4b" stroke-width="1.8" fill="none"/>
<path d="M-926.2 962.2L3030.2 635" stroke="#a8404e" stroke-width="1.4"/>
<path d="M141.2 -111.7L1962.8 1708.9" stroke="#648f34" stroke-width="2.2"/>
<polygon points="57,493 1707.8,356 2027.8,675.7 2046.9,1103.4 396.4,1239.8 76.4,920.1" fill="#7e8082" stroke="#7e8082" stroke-width="0.6"/>
<polygon points="57,493 1707.8,356 2027.8,675.7 377,812.7" fill="#7e8082"/>
<polygon points="57,493 377,812.7 396.4,1239.8 76.4,920.1" fill="#797b7b"/>
<polygon points="57,493 377,812.7 377.5,823.8 57.5,504.1" fill="#7c7e7f"/>
<polygon points="75.5,900.9 395.5,1220.6 396.4,1239.8 76.4,920.1" fill="#818383"/>
<polygon points="377,812.7 2027.8,675.7 2046.9,1103.4 396.4,1239.8" fill="#8b8d8f"/>
<g clip-path="url(#infront)"><path d="M-15.4 1872.5L3941 1545.3M-80.4 1807.5L3876 1480.2M-145.5 1742.5L3810.9 1415.2M-210.5 1677.4L3745.9 1350.2M-275.6 1612.4L3680.8 1285.2M-340.7 1547.4L3615.7 1220.2M-405.7 1482.4L3550.7 1155.1M-470.8 1417.4L3485.6 1090.1M-535.8 1352.3L3420.6 1025.1M-600.9 1287.3L3355.5 960.1M-666 1222.3L3290.4 895.1M-731 1157.3L3225.4 830M-796.1 1092.3L3160.3 765M-861.1 1027.2L3095.3 700M-991.3 897.2L2965.1 570M-1056.3 832.2L2900.1 504.9M-1121.4 767.2L2835 439.9M-1186.4 702.1L2770 374.9M-1251.5 637.1L2704.9 309.9M-1316.6 572.1L2639.8 244.9M-1381.6 507.1L2574.8 179.8M-1446.7 442.1L2509.7 114.8M-1511.7 377L2444.7 49.8M-1576.8 312L2379.6 -15.2M-1641.9 247L2314.5 -80.2M-1706.9 182L2249.5 -145.3M-1772 117L2184.4 -210.3M314.3 1845.2L-1507.3 24.7M644 1818L-1177.6 -2.6M973.7 1790.7L-847.9 -29.9M1303.4 1763.4L-518.2 -57.1M1633.1 1736.2L-188.5 -84.4M2292.5 1681.6L470.9 -138.9M2622.2 1654.3L800.6 -166.2M2951.9 1627.1L1130.3 -193.5M3281.6 1599.8L1460 -220.8M3611.3 1572.5L1789.7 -248" stroke="#5a5c5e" stroke-opacity="0.2" stroke-width="1.7" fill="none"/></g>
<path d="M-926.2 962.2L234.3 866.2" stroke="#b04a56" stroke-width="1.3"/>
<path d="M1210.1 956.6L1962.8 1708.9" stroke="#6a9240" stroke-width="2.2"/>
<polygon points="466.4,898.4 464.1,897.1 1795,786.1 1797.3,787.4" fill="#808284"/>
<polygon points="466.4,898.4 464.1,897.1 473.4,1117.9 475.7,1119.2" fill="#6f7173"/>
<polygon points="530.2,912.9 534.1,912.6 535.6,946.1 531.4,940.7" fill="#7a7c7e"/>
<polygon points="482.3,944.8 531.4,940.7 535.6,946.1 482.5,950.6" fill="#9d9fa1"/>
<polygon points="717.7,897.3 721.6,896.9 723.1,930.5 718.9,925.1" fill="#7a7c7e"/>
<polygon points="669.6,929.2 718.9,925.1 723.1,930.5 669.9,934.9" fill="#9d9fa1"/>
<polygon points="792.1,891.1 796,890.7 797.5,924.3 793.3,918.9" fill="#7a7c7e"/>
<polygon points="744.6,923 793.3,918.9 797.5,924.3 744.9,928.7" fill="#9d9fa1"/>
<polygon points="980.2,875.4 984.2,875.1 985.6,908.6 981.4,903.2" fill="#7a7c7e"/>
<polygon points="933.8,907.2 981.4,903.2 985.6,908.6 934,912.9" fill="#9d9fa1"/>
<polygon points="1051.7,869.4 1055.7,869.1 1057.1,902.7 1052.9,897.3" fill="#7a7c7e"/>
<polygon points="1008.3,901 1052.9,897.3 1057.1,902.7 1008.5,906.7" fill="#9d9fa1"/>
<polygon points="1243.1,853.5 1247.1,853.1 1248.5,886.7 1244.3,881.3" fill="#7a7c7e"/>
<polygon points="1192.8,885.6 1244.3,881.3 1248.5,886.7 1193,891.3" fill="#9d9fa1"/>
<polygon points="1315.9,847.4 1319.9,847.1 1321.4,880.6 1317.2,875.2" fill="#7a7c7e"/>
<polygon points="1269.2,879.2 1317.2,875.2 1321.4,880.6 1269.4,885" fill="#9d9fa1"/>
<polygon points="1503.2,831.8 1507.2,831.4 1508.7,865 1504.5,859.6" fill="#7a7c7e"/>
<polygon points="1451.6,864 1504.5,859.6 1508.7,865 1451.9,869.8" fill="#9d9fa1"/>
<polygon points="1589.3,824.6 1593.3,824.3 1594.8,857.9 1590.6,852.5" fill="#7a7c7e"/>
<polygon points="1543.1,856.4 1590.6,852.5 1594.8,857.9 1543.4,862.1" fill="#9d9fa1"/>
<polygon points="1779.9,808.7 1783.8,808.4 1785.3,842 1781.1,836.6" fill="#7a7c7e"/>
<polygon points="1733.4,840.5 1781.1,836.6 1785.3,842 1733.7,846.3" fill="#9d9fa1"/>
<path d="M466.4 898.4L1797.3 787.4M1797.3 787.4L1807.3 1008.4M1807.3 1008.4L475.7 1119.2M475.7 1119.2L466.4 898.4M464.1 897.1L1795 786.1M464.1 897.1L473.4 1117.9M466.4 898.4L464.1 897.1M1797.3 787.4L1795 786.1M475.7 1119.2L473.4 1117.9M467.2 918.2L1798.2 807.2M468.6 951.7L1799.7 840.8M467.2 918.2L464.9 916.9M468.6 951.7L466.3 950.4M480.3 897.2L489.6 1118M480.3 897.2L478 895.9M533.3 892.8L542.6 1113.6M533.3 892.8L531 891.5M667.6 881.6L677 1102.4M667.6 881.6L665.3 880.3M720.8 877.2L730.2 1098M720.8 877.2L718.5 875.9M742.6 875.4L752 1096.2M742.6 875.4L740.3 874.1M795.2 871L804.7 1091.8M795.2 871L792.9 869.7M931.7 859.6L941.2 1080.5M931.7 859.6L929.4 858.3M983.3 855.3L992.9 1076.2M983.3 855.3L981 854M1006.2 853.4L1015.8 1074.3M1006.2 853.4L1003.9 852.1M1054.8 849.3L1064.4 1070.2M1054.8 849.3L1052.5 848M1190.7 838L1200.4 1058.9M1190.7 838L1188.4 836.7M1246.2 833.4L1255.9 1054.3M1246.2 833.4L1243.9 832.1M1267.1 831.6L1276.8 1052.5M1267.1 831.6L1264.8 830.3M1319 827.3L1328.7 1048.2M1319 827.3L1316.7 826M1449.5 816.4L1459.3 1037.4M1449.5 816.4L1447.2 815.1M1506.3 811.7L1516.1 1032.6M1506.3 811.7L1504 810.4M1541 808.8L1550.9 1029.7M1541 808.8L1538.7 807.5M1592.4 804.5L1602.3 1025.5M1592.4 804.5L1590.1 803.2M1731.3 792.9L1741.3 1013.9M1731.3 792.9L1729 791.6M1782.9 788.6L1792.9 1009.6M1782.9 788.6L1780.6 787.3M530.2 912.9L531.4 940.7M531.4 940.7L482.3 944.8M531.4 940.7L535.6 946.1M717.7 897.3L718.9 925.1M718.9 925.1L669.6 929.2M718.9 925.1L723.1 930.5M792.1 891.1L793.3 918.9M793.3 918.9L744.6 923M793.3 918.9L797.5 924.3M980.2 875.4L981.4 903.2M981.4 903.2L933.8 907.2M981.4 903.2L985.6 908.6M1051.7 869.4L1052.9 897.3M1052.9 897.3L1008.3 901M1052.9 897.3L1057.1 902.7M1243.1 853.5L1244.3 881.3M1244.3 881.3L1192.8 885.6M1244.3 881.3L1248.5 886.7M1315.9 847.4L1317.2 875.2M1317.2 875.2L1269.2 879.2M1317.2 875.2L1321.4 880.6M1503.2 831.8L1504.5 859.6M1504.5 859.6L1451.6 864M1504.5 859.6L1508.7 865M1589.3 824.6L1590.6 852.5M1590.6 852.5L1543.1 856.4M1590.6 852.5L1594.8 857.9M1779.9 808.7L1781.1 836.6M1781.1 836.6L1733.4 840.5M1781.1 836.6L1785.3 842" stroke="#2c2e30" stroke-width="1.05" fill="none" stroke-linecap="round"/>
<path d="M475.7 1119.2L1807.3 1008.4L1797.3 787.4" stroke="#2e3032" stroke-width="1.5" fill="none"/>
<polygon points="1934.8,922.8 1945.3,921.9 1946.7,956.5 1876.3,962.5 1876.0,952.0 1935.9,946.9" fill="#808284"/>
<path d="M1060.3 798.1L1082.7 796.2M1043.3 799.5L1020.9 801.4M1051.4 790.3L1050.4 767.8M1052.2 807.3L1053.2 829.8M1049.3 796.3L1045.1 792.1M1054.3 801.3L1058.5 805.5" stroke="#111" stroke-width="1.7" fill="none"/>
<circle cx="1051.8" cy="798.8" r="16.6" fill="none" stroke="#ffffff" stroke-width="2.4"/>
<circle cx="1051.8" cy="798.8" r="16.6" fill="none" stroke="#e8303a" stroke-width="2.4" stroke-dasharray="6.5 6.5" stroke-dashoffset="3.3"/>
<circle cx="1096" cy="913.3" r="4.6" fill="#f5a233" stroke="#4a3a22" stroke-width="1.3"/>
</g></svg>
<div class="a" style="left:0;top:0;width:2560px;height:1600px;will-change:transform">
<div class="a" style="left:0px;top:0px;width:2560px;height:35.8px;background:#1f1f1f;"></div>
<svg class="a" style="left:1.6px;top:5px;color:#e6e6e6;" width="26" height="26"><use href="#blenderc"/></svg>
<div class="t" style="top:7.2px;color:#ffffff;left:32.5px;font-size:18.8px;font-family:'Liberation Sans','Noto Sans CJK JP',sans-serif;">* (未保存) - Blender 4.0</div>
<svg class="a" style="left:2360.2px;top:4px;color:#ffffff;" width="27" height="27"><use href="#wmin"/></svg>
<svg class="a" style="left:2432.5px;top:4px;color:#ffffff;" width="27" height="27"><use href="#wmax"/></svg>
<svg class="a" style="left:2507.5px;top:4px;color:#ffffff;" width="27" height="27"><use href="#wclose"/></svg>
<div class="a" style="left:0px;top:35.8px;width:2560px;height:43.7px;background:#181818;"></div>
<svg class="a" style="left:11.5px;top:44.5px;color:#e0e0e0;" width="26" height="26"><use href="#blender"/></svg>
<div class="t" style="top:45.5px;color:#e2e2e2;left:53.8px;">ファイル</div>
<div class="t" style="top:45.5px;color:#e2e2e2;left:147px;">編集</div>
<div class="t" style="top:45.5px;color:#e2e2e2;left:207.5px;">レンダー</div>
<div class="t" style="top:45.5px;color:#e2e2e2;left:300.8px;">ウィンドウ</div>
<div class="t" style="top:45.5px;color:#e2e2e2;left:412.9px;">ヘルプ</div>
<div class="a" style="left:625.4px;top:45px;width:116.4px;height:29.5px;background:#303030;border-radius:6px 6px 0 0;"></div>
<div class="t" style="top:49.4px;color:#989898;left:520px;">レイアウト</div>
<div class="t" style="top:49.4px;color:#ffffff;left:639px;">モデリング</div>
<div class="t" style="top:49.4px;color:#989898;left:759.4px;">スカルプト</div>
<div class="t" style="top:49.4px;color:#989898;left:878.4px;">UV編集</div>
<div class="t" style="top:49.4px;color:#989898;left:971px;">テクスチャペイント</div>
<div class="t" style="top:49.4px;color:#989898;left:1161.5px;">シェーディング</div>
<div class="t" style="top:49.4px;color:#989898;left:1316px;">アニメーション</div>
<div class="t" style="top:49.4px;color:#989898;left:1473.4px;">レンダリング</div>
<div class="t" style="top:49.4px;color:#989898;left:1609.7px;">コンポジティング</div>
<div class="a" style="left:1781.6px;top:45px;width:125.4px;height:32px;overflow:hidden"><div class="t" style="top:4.4px;color:#989898;left:0px;">ジオメトリノード</div></div>
<div class="a" style="left:1910.6px;top:48px;width:1.4px;height:26px;background:#3a3a3a;"></div>
<div class="a" style="left:1924.8px;top:41.4px;width:50px;height:30.8px;background:#2a2a2a;border-radius:5px 0 0 5px;box-shadow:inset 0 0 0 1px #3d3d3d;"></div>
<svg class="a" style="left:1931.2px;top:43.5px;color:#e0e0e0;" width="27.5" height="27.5"><use href="#scene"/></svg>
<svg class="a" style="left:1954.8px;top:47.9px;color:#e0e0e0;" width="19.5" height="19.5"><use href="#chev"/></svg>
<div class="a" style="left:1975.4px;top:41.4px;width:190.6px;height:30.8px;background:#1d1d1d;box-shadow:inset 0 0 0 1px #3d3d3d;"></div>
<div class="t l" style="top:45.3px;color:#e6e6e6;left:1986px;">Scene</div>
<svg class="a" style="left:2134.2px;top:43.6px;color:#8c8c8c;" width="27.5" height="27.5"><use href="#pin"/></svg>
<div class="a" style="left:2166.6px;top:41.4px;width:31.2px;height:30.8px;background:#545454;box-shadow:inset 0 0 0 1px #3d3d3d;"></div>
<svg class="a" style="left:2168.4px;top:43.2px;color:#e0e0e0;" width="27.5" height="27.5"><use href="#dup"/></svg>
<div class="a" style="left:2198.6px;top:41.4px;width:31.4px;height:30.8px;background:#363636;border-radius:0 5px 5px 0;box-shadow:inset 0 0 0 1px #3d3d3d;"></div>
<svg class="a" style="left:2203.4px;top:46.2px;color:#6c6c6c;" width="22" height="22"><use href="#x"/></svg>
<div class="a" style="left:2240px;top:41.4px;width:49.4px;height:30.8px;background:#2a2a2a;border-radius:5px 0 0 5px;box-shadow:inset 0 0 0 1px #3d3d3d;"></div>
<svg class="a" style="left:2245.2px;top:43.2px;color:#e0e0e0;" width="27.5" height="27.5"><use href="#vlayer"/></svg>
<svg class="a" style="left:2269.8px;top:47.9px;color:#e0e0e0;" width="19.5" height="19.5"><use href="#chev"/></svg>
<div class="a" style="left:2289.8px;top:41.4px;width:191px;height:30.8px;background:#1d1d1d;box-shadow:inset 0 0 0 1px #3d3d3d;"></div>
<div class="t l" style="top:45.3px;color:#e6e6e6;left:2301px;">ViewLayer</div>
<div class="a" style="left:2481.4px;top:41.4px;width:31.2px;height:30.8px;background:#545454;box-shadow:inset 0 0 0 1px #3d3d3d;"></div>
<svg class="a" style="left:2483.2px;top:43.2px;color:#e0e0e0;" width="27.5" height="27.5"><use href="#dup"/></svg>
<div class="a" style="left:2513.2px;top:41.4px;width:32.4px;height:30.8px;background:#363636;border-radius:0 5px 5px 0;box-shadow:inset 0 0 0 1px #3d3d3d;"></div>
<svg class="a" style="left:2518.4px;top:46.2px;color:#6c6c6c;" width="22" height="22"><use href="#x"/></svg>
<svg class="a" style="left:13.5px;top:1570.5px;color:#c8c8c8;" width="29" height="29"><use href="#m-left"/></svg>
<div class="t" style="top:1573px;color:#a6a6a6;left:54.5px;">最短パス選択</div>
<svg class="a" style="left:351px;top:1570.5px;color:#c8c8c8;" width="29" height="29"><use href="#m-mid"/></svg>
<div class="t" style="top:1573px;color:#a6a6a6;left:393px;">ビューをズーム</div>
<svg class="a" style="left:688px;top:1570.5px;color:#c8c8c8;" width="29" height="29"><use href="#m-right"/></svg>
<div class="t" style="top:1573px;color:#a6a6a6;left:730.5px;">マウス位置に押し出し/追加</div>
<div class="t" style="top:1573px;color:#a6a6a6;left:2499px;font-size:18.2px;">4.0.2</div><div class="a" style="left:2px;top:79.5px;width:2111px;height:43px;background:rgba(54,54,54,0.93);border-radius:9px 9px 0 0;"></div>
<div class="a" style="left:2px;top:122.5px;width:498.8px;height:38px;background:rgba(54,54,54,0.93);border-radius:0 0 8px 0;"></div>
<div class="a" style="left:1798.7px;top:122.5px;width:314.3px;height:38px;background:rgba(54,54,54,0.93);border-radius:0 0 0 8px;"></div>
<div class="a" style="left:15.5px;top:84.9px;width:47.6px;height:27.9px;background:#282828;border-radius:5px;box-shadow:0 1px 1px rgba(0,0,0,0.25);"></div>
<svg class="a" style="left:17.9px;top:85.1px;color:#e6e6e6;" width="27.5" height="27.5"><use href="#view3d"/></svg>
<svg class="a" style="left:43.6px;top:89.7px;color:#e6e6e6;" width="19.5" height="19.5"><use href="#chev"/></svg>
<div class="a" style="left:75px;top:84.9px;width:172px;height:27.9px;background:#282828;border-radius:5px;box-shadow:0 1px 1px rgba(0,0,0,0.25);"></div>
<svg class="a" style="left:77.8px;top:85.1px;color:#e6e6e6;" width="27.5" height="27.5"><use href="#editmode"/></svg>
<div class="t" style="top:86.9px;color:#e6e6e6;left:114.6px;">編集モード</div>
<svg class="a" style="left:227.7px;top:89.7px;color:#e6e6e6;" width="19.5" height="19.5"><use href="#chev"/></svg>
<div class="a" style="left:258px;top:84.9px;width:31px;height:27.9px;background:#545454;border-radius:5px 0 0 5px;box-shadow:0 1px 1px rgba(0,0,0,0.25);"></div>
<svg class="a" style="left:259.2px;top:85.1px;color:#e6e6e6;" width="27.5" height="27.5"><use href="#selv"/></svg>
<div class="a" style="left:289.6px;top:84.9px;width:31px;height:27.9px;background:#545454;box-shadow:0 1px 1px rgba(0,0,0,0.25);"></div>
<svg class="a" style="left:290.9px;top:85.1px;color:#e6e6e6;" width="27.5" height="27.5"><use href="#sele"/></svg>
<div class="a" style="left:321.2px;top:84.9px;width:30.4px;height:27.9px;background:#4772b3;border-radius:0 5px 5px 0;box-shadow:0 1px 1px rgba(0,0,0,0.25);"></div>
<svg class="a" style="left:322.4px;top:85.1px;color:#ffffff;" width="27.5" height="27.5"><use href="#self"/></svg>
<div class="t" style="top:86.9px;color:#e2e2e2;left:373.5px;">ビュー</div>
<div class="t" style="top:86.9px;color:#e2e2e2;left:448.9px;">選択</div>
<div class="t" style="top:86.9px;color:#e2e2e2;left:508.4px;">追加</div>
<div class="t" style="top:86.9px;color:#e2e2e2;left:568.5px;">メッシュ</div>
<div class="t" style="top:86.9px;color:#e2e2e2;left:662.7px;">頂点</div>
<div class="t" style="top:86.9px;color:#e2e2e2;left:721.2px;">辺</div>
<div class="t" style="top:86.9px;color:#e2e2e2;left:762.9px;">面</div>
<div class="t l" style="top:86.9px;color:#e2e2e2;left:805.4px;">UV</div>
<div class="a" style="left:869.5px;top:84.9px;width:123.5px;height:27.9px;background:#282828;border-radius:5px;box-shadow:0 1px 1px rgba(0,0,0,0.25);"></div>
<svg class="a" style="left:872.9px;top:85.1px;color:#e6e6e6;" width="27.5" height="27.5"><use href="#orient"/></svg>
<div class="t" style="top:86.9px;color:#e6e6e6;left:909.4px;">グロ...</div>
<svg class="a" style="left:974.2px;top:89.7px;color:#e6e6e6;" width="19.5" height="19.5"><use href="#chev"/></svg>
<div class="a" style="left:1005.2px;top:84.9px;width:47.4px;height:27.9px;background:#282828;border-radius:5px;box-shadow:0 1px 1px rgba(0,0,0,0.25);"></div>
<svg class="a" style="left:1007.9px;top:85.1px;color:#e6e6e6;" width="27.5" height="27.5"><use href="#pivot"/></svg>
<svg class="a" style="left:1033.7px;top:89.7px;color:#e6e6e6;" width="19.5" height="19.5"><use href="#chev"/></svg>
<div class="a" style="left:1064.4px;top:84.9px;width:29.4px;height:27.9px;background:#545454;border-radius:5px 0 0 5px;box-shadow:0 1px 1px rgba(0,0,0,0.25);"></div>
<svg class="a" style="left:1065.7px;top:85.1px;color:#cfcfcf;" width="27.5" height="27.5"><use href="#magnet"/></svg>
<div class="a" style="left:1094.2px;top:84.9px;width:49.5px;height:27.9px;background:#282828;border-radius:0 5px 5px 0;box-shadow:0 1px 1px rgba(0,0,0,0.25);"></div>
<svg class="a" style="left:1095.7px;top:84.7px;color:#e6e6e6;" width="27.5" height="27.5"><use href="#snapinc"/></svg>
<svg class="a" style="left:1124.7px;top:89.7px;color:#e6e6e6;" width="19.5" height="19.5"><use href="#chev"/></svg>
<div class="a" style="left:1155.2px;top:84.9px;width:29.4px;height:27.9px;background:#4f4f4f;border-radius:5px 0 0 5px;box-shadow:0 1px 1px rgba(0,0,0,0.25);"></div>
<svg class="a" style="left:1156.2px;top:85.1px;color:#d0d0d0;" width="27.5" height="27.5"><use href="#prop"/></svg>
<div class="a" style="left:1185px;top:84.9px;width:50px;height:27.9px;background:#2e2e2e;border-radius:0 5px 5px 0;box-shadow:0 1px 1px rgba(0,0,0,0.25);"></div>
<svg class="a" style="left:1189.2px;top:85.1px;color:#a8a8a8;" width="27.5" height="27.5"><use href="#falloff"/></svg>
<svg class="a" style="left:1216.2px;top:89.7px;color:#5a5a5a;" width="19.5" height="19.5"><use href="#chev"/></svg>
<div class="a" style="left:1652.9px;top:84.9px;width:47.6px;height:27.9px;background:#282828;border-radius:5px;box-shadow:0 1px 1px rgba(0,0,0,0.25);"></div>
<svg class="a" style="left:1655.8px;top:85.1px;color:#e6e6e6;" width="27.5" height="27.5"><use href="#vis"/></svg>
<svg class="a" style="left:1681.7px;top:89.7px;color:#e6e6e6;" width="19.5" height="19.5"><use href="#chev"/></svg>
<div class="a" style="left:1711.8px;top:84.9px;width:29.4px;height:27.9px;background:#4772b3;border-radius:5px 0 0 5px;box-shadow:0 1px 1px rgba(0,0,0,0.25);"></div>
<svg class="a" style="left:1712.8px;top:85.1px;color:#ffffff;" width="27.5" height="27.5"><use href="#gizmo"/></svg>
<div class="a" style="left:1741.6px;top:84.9px;width:31px;height:27.9px;background:#282828;border-radius:0 5px 5px 0;box-shadow:0 1px 1px rgba(0,0,0,0.25);"></div>
<svg class="a" style="left:1747.2px;top:89.7px;color:#e6e6e6;" width="19.5" height="19.5"><use href="#chev"/></svg>
<div class="a" style="left:1783.8px;top:84.9px;width:29.4px;height:27.9px;background:#4772b3;border-radius:5px 0 0 5px;box-shadow:0 1px 1px rgba(0,0,0,0.25);"></div>
<svg class="a" style="left:1784.8px;top:85.1px;color:#ffffff;" width="27.5" height="27.5"><use href="#overlay"/></svg>
<div class="a" style="left:1813.6px;top:84.9px;width:31px;height:27.9px;background:#282828;box-shadow:0 1px 1px rgba(0,0,0,0.25);"></div>
<svg class="a" style="left:1819.2px;top:89.7px;color:#e6e6e6;" width="19.5" height="19.5"><use href="#chev"/></svg>
<div class="a" style="left:1845.4px;top:84.9px;width:50.2px;height:27.9px;background:#282828;border-radius:0 5px 5px 0;box-shadow:0 1px 1px rgba(0,0,0,0.25);"></div>
<svg class="a" style="left:1847.8px;top:85.1px;color:#e6e6e6;" width="27.5" height="27.5"><use href="#editmode"/></svg>
<svg class="a" style="left:1876.7px;top:89.7px;color:#e6e6e6;" width="19.5" height="19.5"><use href="#chev"/></svg>
<div class="a" style="left:1907.5px;top:84.9px;width:28.6px;height:27.9px;background:#545454;border-radius:5px;box-shadow:0 1px 1px rgba(0,0,0,0.25);"></div>
<svg class="a" style="left:1908px;top:85.1px;color:#e6e6e6;" width="27.5" height="27.5"><use href="#xray"/></svg>
<div class="a" style="left:1947.1px;top:84.9px;width:29.8px;height:27.9px;background:#545454;border-radius:5px 0 0 5px;box-shadow:0 1px 1px rgba(0,0,0,0.25);"></div>
<svg class="a" style="left:1948.2px;top:85.1px;color:#e6e6e6;" width="27.5" height="27.5"><use href="#shwire"/></svg>
<div class="a" style="left:1977.3px;top:84.9px;width:29.6px;height:27.9px;background:#4772b3;box-shadow:0 1px 1px rgba(0,0,0,0.25);"></div>
<svg class="a" style="left:1978.2px;top:85.1px;color:#ffffff;" width="27.5" height="27.5"><use href="#shsolid"/></svg>
<div class="a" style="left:2007.4px;top:84.9px;width:29.6px;height:27.9px;background:#545454;box-shadow:0 1px 1px rgba(0,0,0,0.25);"></div>
<svg class="a" style="left:2008.5px;top:85.1px;color:#d6d6d6;" width="27.5" height="27.5"><use href="#shmat"/></svg>
<div class="a" style="left:2037.5px;top:84.9px;width:30.2px;height:27.9px;background:#545454;box-shadow:0 1px 1px rgba(0,0,0,0.25);"></div>
<svg class="a" style="left:2038.7px;top:85.1px;color:#d6d6d6;" width="27.5" height="27.5"><use href="#shrend"/></svg>
<div class="a" style="left:2068.2px;top:84.9px;width:31.2px;height:27.9px;background:#282828;border-radius:0 5px 5px 0;box-shadow:0 1px 1px rgba(0,0,0,0.25);"></div>
<svg class="a" style="left:2073.8px;top:89.7px;color:#e6e6e6;" width="19.5" height="19.5"><use href="#chev"/></svg>
<div class="t" style="top:128.5px;color:#c8c8c8;left:14.2px;">座標系:</div>
<div class="a" style="left:80.4px;top:126.6px;width:155.7px;height:27.9px;background:#282828;border-radius:5px;box-shadow:0 1px 1px rgba(0,0,0,0.25);"></div>
<svg class="a" style="left:83.2px;top:126.8px;color:#e6e6e6;" width="27.5" height="27.5"><use href="#orient2"/></svg>
<div class="t" style="top:128.5px;color:#e6e6e6;left:120px;">デフォルト</div>
<svg class="a" style="left:216.8px;top:131.4px;color:#e6e6e6;" width="19.5" height="19.5"><use href="#chev"/></svg>
<div class="t" style="top:128.5px;color:#c8c8c8;left:253.8px;">ドラッ...</div>
<div class="a" style="left:336.3px;top:126.6px;width:149.4px;height:27.9px;background:#282828;border-radius:5px;box-shadow:0 1px 1px rgba(0,0,0,0.25);"></div>
<div class="t" style="top:128.5px;color:#e6e6e6;left:346.6px;">ボックス選択</div>
<svg class="a" style="left:466.2px;top:131.4px;color:#e6e6e6;" width="19.5" height="19.5"><use href="#chev"/></svg>
<svg class="a" style="left:1812.8px;top:126.8px;color:#c4c4c4;" width="27.5" height="27.5"><use href="#mirror"/></svg>
<div class="a" style="left:1845.4px;top:126.6px;width:24.6px;height:27.9px;background:#545454;border-radius:5px 0 0 5px;box-shadow:0 1px 1px rgba(0,0,0,0.25);"></div>
<div class="t l" style="top:128.8px;color:#e6e6e6;left:1851.4px;">X</div>
<div class="a" style="left:1870.6px;top:126.6px;width:27px;height:27.9px;background:#545454;box-shadow:0 1px 1px rgba(0,0,0,0.25);"></div>
<div class="t l" style="top:128.8px;color:#e6e6e6;left:1877.6px;">Y</div>
<div class="a" style="left:1898.2px;top:126.6px;width:26px;height:27.9px;background:#545454;border-radius:0 5px 5px 0;box-shadow:0 1px 1px rgba(0,0,0,0.25);"></div>
<div class="t l" style="top:128.8px;color:#e6e6e6;left:1905.4px;">Z</div>
<div class="a" style="left:1935.6px;top:126.6px;width:28.8px;height:27.9px;background:#4c4c4c;border-radius:5px;box-shadow:0 1px 1px rgba(0,0,0,0.25);"></div>
<svg class="a" style="left:1936.2px;top:126.8px;color:#8a8a8a;" width="27.5" height="27.5"><use href="#automerge"/></svg>
<div class="a" style="left:1975.3px;top:126.6px;width:124.8px;height:27.9px;background:#282828;border-radius:5px;box-shadow:0 1px 1px rgba(0,0,0,0.25);"></div>
<div class="t" style="top:128.5px;color:#e6e6e6;left:1986.6px;">オプション</div>
<svg class="a" style="left:2080.2px;top:131.4px;color:#e6e6e6;" width="19.5" height="19.5"><use href="#chev"/></svg>
<div class="t" style="top:175.4px;color:#ffffff;left:106px;text-shadow:0 0 2px rgba(0,0,0,0.9),0 1px 2px rgba(0,0,0,0.7);">ユーザー・平行投影</div>
<div class="t l" style="top:203.6px;color:#ffffff;left:106px;text-shadow:0 0 2px rgba(0,0,0,0.9),0 1px 2px rgba(0,0,0,0.7);">(1) LAN</div>
<div class="a" style="left:14.8px;top:176.1px;width:61.4px;height:54.3px;background:#2b2b2b;border-radius:7px 7px 0 0;"></div>
<svg class="a" style="left:24.4px;top:182.2px;color:#e6e6e6;" width="42" height="42"><use href="#t-select"/></svg>
<svg class="a" style="left:67px;top:220px" width="7" height="7"><path d="M7 0V7H0Z" fill="#8c8c8c"/></svg>
<div class="a" style="left:14.8px;top:231.6px;width:61.4px;height:54.3px;background:#2b2b2b;border-radius:0 0 7px 7px;"></div>
<svg class="a" style="left:24.4px;top:237.8px;color:#e6e6e6;" width="42" height="42"><use href="#t-cursor"/></svg>
<div class="a" style="left:14.8px;top:296px;width:61.4px;height:54.3px;background:#4772b3;border-radius:7px 7px 0 0;"></div>
<svg class="a" style="left:24.4px;top:302.1px;color:#e6e6e6;" width="42" height="42"><use href="#t-move"/></svg>
<div class="a" style="left:14.8px;top:351.6px;width:61.4px;height:54.3px;background:#2b2b2b;border-radius:0;"></div>
<svg class="a" style="left:24.4px;top:357.7px;color:#e6e6e6;" width="42" height="42"><use href="#t-rotate"/></svg>
<div class="a" style="left:14.8px;top:407.1px;width:61.4px;height:54.3px;background:#2b2b2b;border-radius:0;"></div>
<svg class="a" style="left:24.4px;top:413.2px;color:#e6e6e6;" width="42" height="42"><use href="#t-scale"/></svg>
<svg class="a" style="left:67px;top:451px" width="7" height="7"><path d="M7 0V7H0Z" fill="#8c8c8c"/></svg>
<div class="a" style="left:14.8px;top:462.6px;width:61.4px;height:54.3px;background:#2b2b2b;border-radius:0 0 7px 7px;"></div>
<svg class="a" style="left:24.4px;top:468.8px;color:#e6e6e6;" width="42" height="42"><use href="#t-transform"/></svg>
<div class="a" style="left:14.8px;top:527.6px;width:61.4px;height:54.3px;background:#2b2b2b;border-radius:7px 7px 0 0;"></div>
<svg class="a" style="left:24.4px;top:533.8px;color:#e6e6e6;" width="42" height="42"><use href="#t-annotate"/></svg>
<svg class="a" style="left:67px;top:571.5px" width="7" height="7"><path d="M7 0V7H0Z" fill="#8c8c8c"/></svg>
<div class="a" style="left:14.8px;top:583.1px;width:61.4px;height:54.3px;background:#2b2b2b;border-radius:0 0 7px 7px;"></div>
<svg class="a" style="left:24.4px;top:589.3px;color:#e6e6e6;" width="42" height="42"><use href="#t-measure"/></svg>
<div class="a" style="left:14.8px;top:647.3px;width:61.4px;height:54.3px;background:#2b2b2b;border-radius:7px;"></div>
<svg class="a" style="left:24.4px;top:653.4px;color:#e6e6e6;" width="42" height="42"><use href="#t-addcube"/></svg>
<svg class="a" style="left:67px;top:691.2px" width="7" height="7"><path d="M7 0V7H0Z" fill="#8c8c8c"/></svg>
<div class="a" style="left:14.8px;top:711.3px;width:61.4px;height:54.3px;background:#2b2b2b;border-radius:7px 7px 0 0;"></div>
<svg class="a" style="left:24.4px;top:717.4px;color:#e6e6e6;" width="42" height="42"><use href="#t-extrude"/></svg>
<svg class="a" style="left:67px;top:755.2px" width="7" height="7"><path d="M7 0V7H0Z" fill="#8c8c8c"/></svg>
<div class="a" style="left:14.8px;top:766.8px;width:61.4px;height:54.3px;background:#2b2b2b;border-radius:0;"></div>
<svg class="a" style="left:24.4px;top:773px;color:#e6e6e6;" width="42" height="42"><use href="#t-inset"/></svg>
<div class="a" style="left:14.8px;top:822.4px;width:61.4px;height:54.3px;background:#2b2b2b;border-radius:0;"></div>
<svg class="a" style="left:24.4px;top:828.5px;color:#e6e6e6;" width="42" height="42"><use href="#t-bevel"/></svg>
<div class="a" style="left:14.8px;top:877.9px;width:61.4px;height:54.3px;background:#2b2b2b;border-radius:0;"></div>
<svg class="a" style="left:24.4px;top:884.1px;color:#e6e6e6;" width="42" height="42"><use href="#t-loopcut"/></svg>
<svg class="a" style="left:67px;top:921.8px" width="7" height="7"><path d="M7 0V7H0Z" fill="#8c8c8c"/></svg>
<div class="a" style="left:14.8px;top:933.5px;width:61.4px;height:54.3px;background:#2b2b2b;border-radius:0;"></div>
<svg class="a" style="left:24.4px;top:939.6px;color:#e6e6e6;" width="42" height="42"><use href="#t-knife"/></svg>
<svg class="a" style="left:67px;top:977.4px" width="7" height="7"><path d="M7 0V7H0Z" fill="#8c8c8c"/></svg>
<div class="a" style="left:14.8px;top:989px;width:61.4px;height:54.3px;background:#2b2b2b;border-radius:0;"></div>
<svg class="a" style="left:24.4px;top:995.2px;color:#e6e6e6;" width="42" height="42"><use href="#t-poly"/></svg>
<div class="a" style="left:14.8px;top:1044.6px;width:61.4px;height:54.3px;background:#2b2b2b;border-radius:0;"></div>
<svg class="a" style="left:24.4px;top:1050.8px;color:#e6e6e6;" width="42" height="42"><use href="#t-spin"/></svg>
<svg class="a" style="left:67px;top:1088.5px" width="7" height="7"><path d="M7 0V7H0Z" fill="#8c8c8c"/></svg>
<div class="a" style="left:14.8px;top:1100.1px;width:61.4px;height:54.3px;background:#2b2b2b;border-radius:0;"></div>
<svg class="a" style="left:24.4px;top:1106.3px;color:#e6e6e6;" width="42" height="42"><use href="#t-smooth"/></svg>
<svg class="a" style="left:67px;top:1144px" width="7" height="7"><path d="M7 0V7H0Z" fill="#8c8c8c"/></svg>
<div class="a" style="left:14.8px;top:1155.7px;width:61.4px;height:54.3px;background:#2b2b2b;border-radius:0;"></div>
<svg class="a" style="left:24.4px;top:1161.8px;color:#e6e6e6;" width="42" height="42"><use href="#t-eslide"/></svg>
<svg class="a" style="left:67px;top:1199.6px" width="7" height="7"><path d="M7 0V7H0Z" fill="#8c8c8c"/></svg>
<div class="a" style="left:14.8px;top:1211.2px;width:61.4px;height:54.3px;background:#2b2b2b;border-radius:0;"></div>
<svg class="a" style="left:24.4px;top:1217.4px;color:#e6e6e6;" width="42" height="42"><use href="#t-shrink"/></svg>
<svg class="a" style="left:67px;top:1255.1px" width="7" height="7"><path d="M7 0V7H0Z" fill="#8c8c8c"/></svg>
<div class="a" style="left:14.8px;top:1266.8px;width:61.4px;height:54.3px;background:#2b2b2b;border-radius:0;"></div>
<svg class="a" style="left:24.4px;top:1273px;color:#e6e6e6;" width="42" height="42"><use href="#t-shear"/></svg>
<svg class="a" style="left:67px;top:1310.7px" width="7" height="7"><path d="M7 0V7H0Z" fill="#8c8c8c"/></svg>
<div class="a" style="left:14.8px;top:1322.3px;width:61.4px;height:54.3px;background:#2b2b2b;border-radius:0 0 7px 7px;"></div>
<svg class="a" style="left:24.4px;top:1328.5px;color:#e6e6e6;" width="42" height="42"><use href="#t-rip"/></svg>
<svg class="a" style="left:67px;top:1366.2px" width="7" height="7"><path d="M7 0V7H0Z" fill="#8c8c8c"/></svg>
<svg class="a" style="left:1960px;top:170px" width="150" height="150" viewBox="1960 170 150 150"><circle cx="2023.2" cy="231.6" r="11.6" fill="#6b9a1f"/><text x="2023.2" y="237.2" font-size="14.5" font-weight="bold" text-anchor="middle" fill="#1e2a0a" font-family="Liberation Sans,sans-serif">Y</text><circle cx="1983.6" cy="245.5" r="12" fill="#8d3744" fill-opacity="0.9" stroke="#e6475c" stroke-width="2.4"/><circle cx="2035.6" cy="291.4" r="11.6" fill="#3a5a86" fill-opacity="0.9" stroke="#3a86e0" stroke-width="2.4"/><path d="M2034.2 241.6L2031.4 191" stroke="#3b8cec" stroke-width="3.4"/><path d="M2034.2 241.6L2083.6 237.2" stroke="#ee4a5e" stroke-width="3.4"/><circle cx="2031.2" cy="191.2" r="13.2" fill="#3b8cec"/><text x="2031.2" y="196.8" font-size="15.5" font-weight="bold" text-anchor="middle" fill="#0c1c3a" font-family="Liberation Sans,sans-serif">Z</text><circle cx="2083.6" cy="237.2" r="13.2" fill="#ee4a5e"/><text x="2083.6" y="242.8" font-size="15.5" font-weight="bold" text-anchor="middle" fill="#3a0a12" font-family="Liberation Sans,sans-serif">X</text><circle cx="2043.5" cy="251.4" r="12.4" fill="#566e2c" stroke="#9bdc2a" stroke-width="2.6"/></svg>
<div class="a" style="left:2056.2px;top:307.6px;width:42.4px;height:42.4px;border-radius:50%;background:rgba(40,40,40,0.62)"></div>
<svg class="a" style="left:2062.4px;top:313.8px;color:#e8e8e8;" width="30" height="30"><use href="#n-zoom"/></svg>
<div class="a" style="left:2056.2px;top:356px;width:42.4px;height:42.4px;border-radius:50%;background:rgba(40,40,40,0.62)"></div>
<svg class="a" style="left:2063.4px;top:363.2px;color:#e8e8e8;" width="28" height="28"><use href="#n-hand"/></svg>
<div class="a" style="left:2056.2px;top:404.4px;width:42.4px;height:42.4px;border-radius:50%;background:rgba(40,40,40,0.62)"></div>
<svg class="a" style="left:2063.4px;top:411.6px;color:#e8e8e8;" width="28" height="28"><use href="#n-camera"/></svg>
<div class="a" style="left:2056.2px;top:452.4px;width:42.4px;height:42.4px;border-radius:50%;background:rgba(40,40,40,0.62)"></div>
<svg class="a" style="left:2063.4px;top:459.6px;color:#e8e8e8;" width="28" height="28"><use href="#n-grid"/></svg>
<div class="a" style="left:2100.6px;top:183.6px;width:12.4px;height:23.6px;background:rgba(48,48,48,0.75);border-radius:4px 0 0 4px;"></div>
<svg class="a" style="left:2102px;top:189px" width="10" height="13"><path d="M7.6 1.4L2.6 6.5L7.6 11.6" fill="none" stroke="#c8c8c8" stroke-width="1.7"/></svg><div class="a" style="left:2118.4px;top:79.5px;width:440px;height:438.8px;background:#282828;border-radius:9px;overflow:hidden">
<div class="a" style="left:0px;top:0px;width:460px;height:42.5px;background:#2a2a2a;"></div>
<div class="a" style="left:13.2px;top:4.7px;width:49.8px;height:30.2px;background:#282828;border-radius:5px;box-shadow:inset 0 0 0 1px #3d3d3d;"></div>
<svg class="a" style="left:15.4px;top:6px;color:#e6e6e6;" width="27.5" height="27.5"><use href="#o-display"/></svg>
<svg class="a" style="left:43.4px;top:10.5px;color:#e6e6e6;" width="19.5" height="19.5"><use href="#chev"/></svg>
<div class="a" style="left:72px;top:4.7px;width:49.8px;height:30.2px;background:#282828;border-radius:5px;box-shadow:inset 0 0 0 1px #3d3d3d;"></div>
<svg class="a" style="left:74.2px;top:5.8px;color:#e6e6e6;" width="27.5" height="27.5"><use href="#vlayer"/></svg>
<svg class="a" style="left:102.2px;top:10.5px;color:#e6e6e6;" width="19.5" height="19.5"><use href="#chev"/></svg>
<div class="a" style="left:148.6px;top:4.7px;width:183.4px;height:30.2px;background:#1d1d1d;border-radius:5px;box-shadow:inset 0 0 0 1px #3d3d3d;"></div>
<svg class="a" style="left:153.8px;top:6px;color:#dcdcdc;" width="27.5" height="27.5"><use href="#search"/></svg>
<div class="a" style="left:359.3px;top:4.7px;width:49.6px;height:30.2px;background:#282828;border-radius:5px;box-shadow:inset 0 0 0 1px #3d3d3d;"></div>
<svg class="a" style="left:361.4px;top:6.2px;color:#e6e6e6;" width="27.5" height="27.5"><use href="#o-filter"/></svg>
<svg class="a" style="left:389.4px;top:10.5px;color:#e6e6e6;" width="19.5" height="19.5"><use href="#chev"/></svg>
<div class="a" style="left:419.3px;top:4.7px;width:40px;height:30.2px;background:#545454;border-radius:5px;box-shadow:inset 0 0 0 1px #3d3d3d;"></div>
<svg class="a" style="left:421.8px;top:6.2px;color:#d8d8d8;" width="27.5" height="27.5"><use href="#collo"/></svg>
<div class="a" style="left:0px;top:74.4px;width:460px;height:31.9px;background:#2b2b2b;"></div>
<div class="a" style="left:0px;top:138.2px;width:460px;height:31.9px;background:#2b2b2b;"></div>
<div class="a" style="left:0px;top:202px;width:460px;height:31.9px;background:#2b2b2b;"></div>
<div class="a" style="left:0px;top:265.8px;width:460px;height:31.9px;background:#2b2b2b;"></div>
<div class="a" style="left:0px;top:329.6px;width:460px;height:31.9px;background:#2b2b2b;"></div>
<div class="a" style="left:0px;top:393.4px;width:460px;height:31.9px;background:#2b2b2b;"></div>
<div class="a" style="left:0px;top:297.7px;width:460px;height:31.9px;background:#334d80;"></div>
<div class="a" style="left:45px;top:113.5px;width:1.2px;height:176px;background:#4c4c4c;"></div>
<svg class="a" style="left:33.4px;top:44.3px;color:#dcdcdc;" width="27.5" height="27.5"><use href="#coll"/></svg>
<div class="t" style="top:46.4px;color:#cfcfcf;left:69.6px;">シーンコレクション</div>
<svg class="a" style="left:37.1px;top:81.2px;color:#c8c8c8;" width="19" height="19"><use href="#triD"/></svg>
<div class="a" style="left:64px;top:75.9px;width:30.6px;height:28.8px;background:#424242;border-radius:7px;box-shadow:inset 0 0 0 1.4px #6a6a6a;"></div>
<svg class="a" style="left:66.1px;top:77px;color:#e6e6e6;" width="26.4" height="26.4"><use href="#coll"/></svg>
<div class="t l" style="top:78.7px;color:#dedede;left:102px;">Collection</div>
<svg class="a" style="left:335.1px;top:80.1px;color:#e6e6e6;" width="19.6" height="19.6"><use href="#cbox"/></svg>
<svg class="a" style="left:69.5px;top:112.8px;color:#c8c8c8;" width="19" height="19"><use href="#triR"/></svg>
<svg class="a" style="left:98.7px;top:109.3px;color:#e19658;" width="25" height="25"><use href="#camobj"/></svg>
<div class="t l" style="top:110.6px;color:#dedede;left:134px;">Camera</div>
<div class="a" style="left:230px;top:107.8px;width:31.2px;height:28.8px;background:#424242;border-radius:7px;box-shadow:inset 0 0 0 1.4px #6a6a6a;"></div>
<svg class="a" style="left:233.6px;top:109.8px;color:#00d4a3;" width="24" height="24"><use href="#camdata"/></svg>
<svg class="a" style="left:69.5px;top:144.6px;color:#6e6e6e;" width="19" height="19"><use href="#triR"/></svg>
<svg class="a" style="left:98.7px;top:141.2px;color:#96663f;" width="25" height="25"><use href="#lightobj"/></svg>
<div class="t l" style="top:142.4px;color:#7c7c7c;left:134px;">Light</div>
<svg class="a" style="left:210.5px;top:143.2px;color:#11876c;" width="23" height="23"><use href="#lightdata"/></svg>
<svg class="a" style="left:69.5px;top:176.6px;color:#6e6e6e;" width="19" height="19"><use href="#triR"/></svg>
<svg class="a" style="left:98.7px;top:173.2px;color:#96663f;" width="25" height="25"><use href="#imgempty"/></svg>
<div class="t" style="top:174.4px;color:#7c7c7c;left:134px;">エンプティ</div>
<svg class="a" style="left:257.6px;top:173.7px;color:#85454f;" width="24" height="24"><use href="#imgdata"/></svg>
<svg class="a" style="left:69.5px;top:208.4px;color:#6e6e6e;" width="19" height="19"><use href="#triR"/></svg>
<svg class="a" style="left:98.7px;top:205.1px;color:#96663f;" width="25" height="25"><use href="#imgempty"/></svg>
<div class="t" style="top:206.2px;color:#7c7c7c;left:134px;">エンプティ.001</div>
<svg class="a" style="left:295.8px;top:205.6px;color:#85454f;" width="24" height="24"><use href="#imgdata"/></svg>
<svg class="a" style="left:69.5px;top:240.3px;color:#6e6e6e;" width="19" height="19"><use href="#triR"/></svg>
<svg class="a" style="left:98.7px;top:236.9px;color:#96663f;" width="25" height="25"><use href="#imgempty"/></svg>
<div class="t" style="top:238.1px;color:#7c7c7c;left:134px;">エンプティ.002</div>
<svg class="a" style="left:295.8px;top:237.4px;color:#85454f;" width="24" height="24"><use href="#imgdata"/></svg>
<svg class="a" style="left:69.5px;top:272.2px;color:#6e6e6e;" width="19" height="19"><use href="#triR"/></svg>
<svg class="a" style="left:98.7px;top:268.8px;color:#96663f;" width="25" height="25"><use href="#imgempty"/></svg>
<div class="t" style="top:270px;color:#7c7c7c;left:134px;">エンプティ.003</div>
<svg class="a" style="left:295.8px;top:269.3px;color:#85454f;" width="24" height="24"><use href="#imgdata"/></svg>
<svg class="a" style="left:2px;top:300.1px;color:#dcdcdc;" width="26.4" height="26.4"><use href="#editmode"/></svg>
<svg class="a" style="left:37.5px;top:304.1px;color:#d0d0d0;" width="19" height="19"><use href="#triR"/></svg>
<div class="a" style="left:64px;top:299.2px;width:30.6px;height:28.8px;background:#4d607f;border-radius:7px;box-shadow:inset 0 0 0 1.4px #7183a0;"></div>
<svg class="a" style="left:66.1px;top:300.8px;color:#e6955a;" width="26.4" height="26.4"><use href="#meshobj"/></svg>
<div class="t l" style="top:301.9px;color:#f3a83c;left:102px;">LAN</div>
<div class="a" style="left:169.2px;top:299.2px;width:31.4px;height:28.8px;background:#2f6a86;border-radius:7px;box-shadow:inset 0 0 0 1.4px #4a8aa6;"></div>
<svg class="a" style="left:171.7px;top:300.2px;color:#0cdcb0;--x:0" width="26.4" height="26.4"><use href="#meshdata"/></svg>
<div class="a" style="left:11.9px;top:342.2px;width:6.6px;height:6.6px;border-radius:50%;background:#dcdcdc"></div>
<svg class="a" style="left:37.5px;top:336px;color:#c8c8c8;" width="19" height="19"><use href="#triR"/></svg>
<svg class="a" style="left:66.1px;top:332.7px;color:#e19658;" width="26.4" height="26.4"><use href="#meshobj"/></svg>
<div class="t" style="top:333.5px;color:#dedede;left:102px;">筐体</div>
<svg class="a" style="left:171.7px;top:332.1px;color:#00d4a3;" width="26.4" height="26.4"><use href="#meshdata"/></svg>
<svg class="a" style="left:364.4px;top:78px;color:#e8e8e8;" width="23.4" height="23.4"><use href="#eye"/></svg>
<svg class="a" style="left:396.5px;top:78.4px;color:#e6e6e6;" width="23" height="23"><use href="#rcam"/></svg>
<svg class="a" style="left:364.4px;top:110px;color:#e8e8e8;" width="23.4" height="23.4"><use href="#eye"/></svg>
<svg class="a" style="left:396.5px;top:110.3px;color:#e6e6e6;" width="23" height="23"><use href="#rcam"/></svg>
<svg class="a" style="left:362.9px;top:141.9px;color:#9a9a9a;" width="26.4" height="26.4"><use href="#eyec"/></svg>
<svg class="a" style="left:396.5px;top:142.2px;color:#e6e6e6;" width="23" height="23"><use href="#rcam"/></svg>
<svg class="a" style="left:362.9px;top:173.9px;color:#9a9a9a;" width="26.4" height="26.4"><use href="#eyec"/></svg>
<svg class="a" style="left:396.5px;top:174.2px;color:#e6e6e6;" width="23" height="23"><use href="#rcam"/></svg>
<svg class="a" style="left:362.9px;top:205.8px;color:#9a9a9a;" width="26.4" height="26.4"><use href="#eyec"/></svg>
<svg class="a" style="left:396.5px;top:206.1px;color:#e6e6e6;" width="23" height="23"><use href="#rcam"/></svg>
<svg class="a" style="left:362.9px;top:237.6px;color:#9a9a9a;" width="26.4" height="26.4"><use href="#eyec"/></svg>
<svg class="a" style="left:396.5px;top:237.9px;color:#e6e6e6;" width="23" height="23"><use href="#rcam"/></svg>
<svg class="a" style="left:362.9px;top:269.5px;color:#9a9a9a;" width="26.4" height="26.4"><use href="#eyec"/></svg>
<svg class="a" style="left:396.5px;top:269.8px;color:#e6e6e6;" width="23" height="23"><use href="#rcam"/></svg>
<svg class="a" style="left:364.4px;top:301.3px;color:#e8e8e8;" width="23.4" height="23.4"><use href="#eye"/></svg>
<svg class="a" style="left:396.5px;top:301.8px;color:#e6e6e6;" width="23" height="23"><use href="#rcam"/></svg>
<svg class="a" style="left:364.4px;top:333.2px;color:#e8e8e8;" width="23.4" height="23.4"><use href="#eye"/></svg>
<svg class="a" style="left:396.5px;top:333.6px;color:#e6e6e6;" width="23" height="23"><use href="#rcam"/></svg>
</div><div class="a" style="left:2118.4px;top:523.6px;width:440px;height:1042px;background:#303030;border-radius:9px;overflow:hidden">
<div class="a" style="left:0px;top:0px;width:440px;height:40.6px;background:#303030;"></div>
<div class="a" style="left:13.6px;top:5.4px;width:49px;height:28.8px;background:#282828;border-radius:5px;box-shadow:inset 0 0 0 1px #3d3d3d;"></div>
<svg class="a" style="left:16.2px;top:6px;color:#e6e6e6;" width="27.5" height="27.5"><use href="#p-editor"/></svg>
<svg class="a" style="left:43.4px;top:10.9px;color:#e6e6e6;" width="19.5" height="19.5"><use href="#chev"/></svg>
<div class="a" style="left:124px;top:5.4px;width:181.8px;height:28.8px;background:#1d1d1d;border-radius:5px;box-shadow:inset 0 0 0 1px #3d3d3d;"></div>
<svg class="a" style="left:128.4px;top:6px;color:#dcdcdc;" width="27.5" height="27.5"><use href="#search"/></svg>
<div class="a" style="left:397.9px;top:5.4px;width:29.8px;height:28.8px;background:#282828;border-radius:5px;box-shadow:inset 0 0 0 1px #3d3d3d;"></div>
<svg class="a" style="left:403px;top:10.9px;color:#e6e6e6;" width="19.5" height="19.5"><use href="#chev"/></svg>
<div class="a" style="left:0px;top:40.6px;width:45.8px;height:1010px;background:#1b1b1b;"></div>
<div class="a" style="left:2.2px;top:45.8px;width:43.4px;height:58px;background:#1f1f1f;border-radius:6px 0 0 6px;"></div>
<div class="a" style="left:2.2px;top:108.8px;width:43.4px;height:228px;background:#1f1f1f;border-radius:6px 0 0 6px;"></div>
<div class="a" style="left:2.2px;top:345.8px;width:43.4px;height:50px;background:#1f1f1f;border-radius:6px 0 0 6px;"></div>
<div class="a" style="left:2.2px;top:403px;width:43.4px;height:316px;background:#1f1f1f;border-radius:6px 0 0 6px;"></div>
<div class="a" style="left:4.2px;top:202.2px;width:41.6px;height:40.8px;background:#303030;border-radius:6px 0 0 6px;"></div>
<svg class="a" style="left:12.3px;top:62.4px;color:#c2c2c2;" width="25" height="25"><use href="#p-tool"/></svg>
<svg class="a" style="left:12.3px;top:119.7px;color:#c2c2c2;" width="25" height="25"><use href="#p-render"/></svg>
<svg class="a" style="left:12.3px;top:164.9px;color:#c2c2c2;" width="25" height="25"><use href="#p-output"/></svg>
<svg class="a" style="left:12.3px;top:209.9px;color:#e2e2e2;" width="25" height="25"><use href="#vlayer"/></svg>
<svg class="a" style="left:12.3px;top:254.9px;color:#c2c2c2;" width="25" height="25"><use href="#scene"/></svg>
<svg class="a" style="left:12.3px;top:299.6px;color:#c45c66;" width="25" height="25"><use href="#p-world"/></svg>
<svg class="a" style="left:12.3px;top:358.6px;color:#ececec;" width="25" height="25"><use href="#collo"/></svg>
<svg class="a" style="left:12.3px;top:414.7px;color:#e19658;" width="25" height="25"><use href="#p-object"/></svg>
<svg class="a" style="left:12.3px;top:459.7px;color:#5b8fe0;" width="25" height="25"><use href="#p-mod"/></svg>
<svg class="a" style="left:12.3px;top:504.6px;color:#5b8fe0;" width="25" height="25"><use href="#p-part"/></svg>
<svg class="a" style="left:12.3px;top:548.9px;color:#5b8fe0;" width="25" height="25"><use href="#p-phys"/></svg>
<svg class="a" style="left:12.3px;top:594.6px;color:#5b8fe0;" width="25" height="25"><use href="#p-constr"/></svg>
<svg class="a" style="left:12.3px;top:638.9px;color:#00d4a3;" width="25" height="25"><use href="#meshdata"/></svg>
<svg class="a" style="left:12.3px;top:683.7px;color:#c45c66;" width="25" height="25"><use href="#p-mat"/></svg>
<svg class="a" style="left:61px;top:55.2px;color:#dcdcdc;" width="27.5" height="27.5"><use href="#scene"/></svg>
<div class="t l" style="top:57.6px;color:#e6e6e6;left:100.6px;">Scene</div>
<svg class="a" style="left:168.8px;top:56px;color:#c8c8c8;" width="27.5" height="27.5"><use href="#chevR"/></svg>
<svg class="a" style="left:200.4px;top:55px;color:#dcdcdc;" width="27.5" height="27.5"><use href="#vlayer"/></svg>
<div class="t l" style="top:57.6px;color:#e6e6e6;left:240.6px;">ViewLayer</div>
<svg class="a" style="left:399px;top:56px;color:#9a9a9a;" width="26" height="26"><use href="#pin"/></svg>
<div class="a" style="left:58.6px;top:102px;width:369px;height:131.2px;background:#3a3a3a;border-radius:7px;"></div>
<svg class="a" style="left:68.7px;top:112.1px;color:#c8c8c8;" width="19" height="19"><use href="#panelv"/></svg>
<div class="t" style="top:109.4px;color:#dedede;left:94.6px;">ビューレイヤー</div>
<svg class="a" style="left:399.1px;top:111.9px;color:#6e6e6e;" width="19" height="19"><use href="#dots"/></svg>
<div class="a" style="left:204.4px;top:160.2px;width:19.6px;height:19.6px;background:#4772b3;border-radius:4px;box-shadow:0 1px 1px rgba(0,0,0,0.3);"></div><svg class="a" style="left:204.7px;top:160.5px;color:#ffffff;" width="19" height="19"><use href="#check"/></svg>
<div class="t" style="top:158px;color:#dedede;left:231.2px;">レンダリングに...</div>
<div class="a" style="left:396px;top:167.2px;width:6.4px;height:6.4px;border-radius:50%;background:#d8d8d8"></div>
<div class="a" style="left:204.4px;top:195.6px;width:19.6px;height:19.6px;background:#545454;border-radius:4px;box-shadow:0 1px 1px rgba(0,0,0,0.3);"></div>
<div class="t" style="top:193.4px;color:#dedede;left:232px;">単一レイヤーの...</div>
<div class="a" style="left:58.6px;top:237.6px;width:369px;height:820px;background:#3a3a3a;border-radius:7px 7px 0 0;"></div>
<svg class="a" style="left:68.7px;top:248.9px;color:#c8c8c8;" width="19" height="19"><use href="#panelv"/></svg>
<div class="t" style="top:246.2px;color:#dedede;left:94.6px;">パス</div>
<svg class="a" style="left:399.1px;top:248.9px;color:#6e6e6e;" width="19" height="19"><use href="#dots"/></svg>
<div class="a" style="left:58.6px;top:278px;width:369px;height:780px;background:#353535;"></div>
<div class="a" style="left:58.6px;top:278px;width:369px;height:38.2px;background:#3d3d3d;"></div><svg class="a" style="left:91.1px;top:288.1px;color:#c8c8c8;" width="19" height="19"><use href="#panelv"/></svg><div class="t" style="top:285.2px;color:#dedede;left:116.2px;">データ</div>
<div class="a" style="left:217.2px;top:336.5px;width:19.6px;height:19.6px;background:#4772b3;border-radius:4px;box-shadow:0 1px 1px rgba(0,0,0,0.3);"></div><svg class="a" style="left:217.5px;top:336.8px;color:#ffffff;" width="19" height="19"><use href="#check"/></svg>
<div class="t" style="top:334.3px;color:#dedede;left:244px;">統合</div>
<div class="a" style="left:217.2px;top:371.4px;width:19.6px;height:19.6px;background:#545454;border-radius:4px;box-shadow:0 1px 1px rgba(0,0,0,0.3);"></div>
<div class="t l" style="top:369.2px;color:#dedede;left:244px;">Z</div>
<div class="a" style="left:217.2px;top:406.8px;width:19.6px;height:19.6px;background:#545454;border-radius:4px;box-shadow:0 1px 1px rgba(0,0,0,0.3);"></div>
<div class="t" style="top:404.6px;color:#dedede;left:244px;">ミスト</div>
<div class="a" style="left:217.2px;top:441.8px;width:19.6px;height:19.6px;background:#545454;border-radius:4px;box-shadow:0 1px 1px rgba(0,0,0,0.3);"></div>
<div class="t" style="top:439.6px;color:#dedede;left:244px;">ノーマル</div>
<div class="a" style="left:58.6px;top:480.2px;width:369px;height:38.2px;background:#3d3d3d;"></div><svg class="a" style="left:91.1px;top:492.7px;color:#c8c8c8;" width="19" height="19"><use href="#panelv"/></svg><div class="t" style="top:489.8px;color:#dedede;left:116.2px;">ライト</div>
<div class="a" style="left:217.2px;top:539.2px;width:19.6px;height:19.6px;background:#545454;border-radius:4px;box-shadow:0 1px 1px rgba(0,0,0,0.3);"></div>
<div class="t" style="top:537px;color:#dedede;left:244px;">ライト</div>
<div class="t" style="top:537px;color:#dedede;right:238.8px;">ディフューズ</div>
<div class="a" style="left:217.2px;top:571.8px;width:19.6px;height:19.6px;background:#545454;border-radius:4px;box-shadow:0 1px 1px rgba(0,0,0,0.3);"></div>
<div class="t" style="top:569.6px;color:#dedede;left:244px;">カラー</div>
<div class="a" style="left:217.2px;top:611.4px;width:19.6px;height:19.6px;background:#545454;border-radius:4px;box-shadow:0 1px 1px rgba(0,0,0,0.3);"></div>
<div class="t" style="top:609.2px;color:#dedede;left:244px;">ライト</div>
<div class="t" style="top:609.2px;color:#dedede;right:238.8px;">スペキュラー</div>
<div class="a" style="left:217.2px;top:643.4px;width:19.6px;height:19.6px;background:#545454;border-radius:4px;box-shadow:0 1px 1px rgba(0,0,0,0.3);"></div>
<div class="t" style="top:641.2px;color:#dedede;left:244px;">カラー</div>
<div class="a" style="left:217.2px;top:683.6px;width:19.6px;height:19.6px;background:#545454;border-radius:4px;box-shadow:0 1px 1px rgba(0,0,0,0.3);"></div>
<div class="t" style="top:681.4px;color:#dedede;left:244px;">ライト</div>
<div class="t" style="top:681.4px;color:#dedede;right:238.8px;">ボリューム</div>
<div class="a" style="left:217.2px;top:723.4px;width:19.6px;height:19.6px;background:#545454;border-radius:4px;box-shadow:0 1px 1px rgba(0,0,0,0.3);"></div>
<div class="t" style="top:721.2px;color:#dedede;left:244px;">放射</div>
<div class="t" style="top:721.2px;color:#dedede;right:238.8px;">その他</div>
<div class="a" style="left:217.2px;top:755.6px;width:19.6px;height:19.6px;background:#545454;border-radius:4px;box-shadow:0 1px 1px rgba(0,0,0,0.3);"></div>
<div class="t" style="top:753.4px;color:#dedede;left:244px;">環境</div>
<div class="a" style="left:217.2px;top:787.6px;width:19.6px;height:19.6px;background:#545454;border-radius:4px;box-shadow:0 1px 1px rgba(0,0,0,0.3);"></div>
<div class="t" style="top:785.4px;color:#dedede;left:244px;">影</div>
<div class="a" style="left:217.2px;top:819.4px;width:19.6px;height:19.6px;background:#545454;border-radius:4px;box-shadow:0 1px 1px rgba(0,0,0,0.3);"></div>
<div class="t" style="top:817.2px;color:#dedede;left:244px;">アンビエ...ージョン</div>
<div class="a" style="left:58.6px;top:857.6px;width:369px;height:39.8px;background:#3d3d3d;"></div><svg class="a" style="left:91.1px;top:869.7px;color:#c8c8c8;" width="19" height="19"><use href="#panelv"/></svg><div class="t" style="top:866.8px;color:#dedede;left:116.2px;">エフェクト</div>
<div class="a" style="left:217.2px;top:917.2px;width:19.6px;height:19.6px;background:#474747;border-radius:4px;box-shadow:0 1px 1px rgba(0,0,0,0.3);"></div>
<div class="t" style="top:915px;color:#777777;left:244px;">ブルーム</div>
<div class="a" style="left:217.2px;top:957.6px;width:19.6px;height:19.6px;background:#545454;border-radius:4px;box-shadow:0 1px 1px rgba(0,0,0,0.3);"></div>
<div class="t" style="top:955.4px;color:#dedede;left:244px;">透過</div>
<div class="a" style="left:58.6px;top:996.4px;width:369px;height:46px;background:#3d3d3d;"></div><svg class="a" style="left:91.1px;top:1007.3px;color:#c8c8c8;" width="19" height="19"><use href="#panelv"/></svg><div class="t l" style="top:1004.4px;color:#dedede;left:116.2px;">Cryptomatte</div>
<div class="a" style="left:432.8px;top:55.4px;width:3.6px;height:677px;background:#4a4a4a;border-radius:2px;"></div>
</div>
</div>
</body></html>
